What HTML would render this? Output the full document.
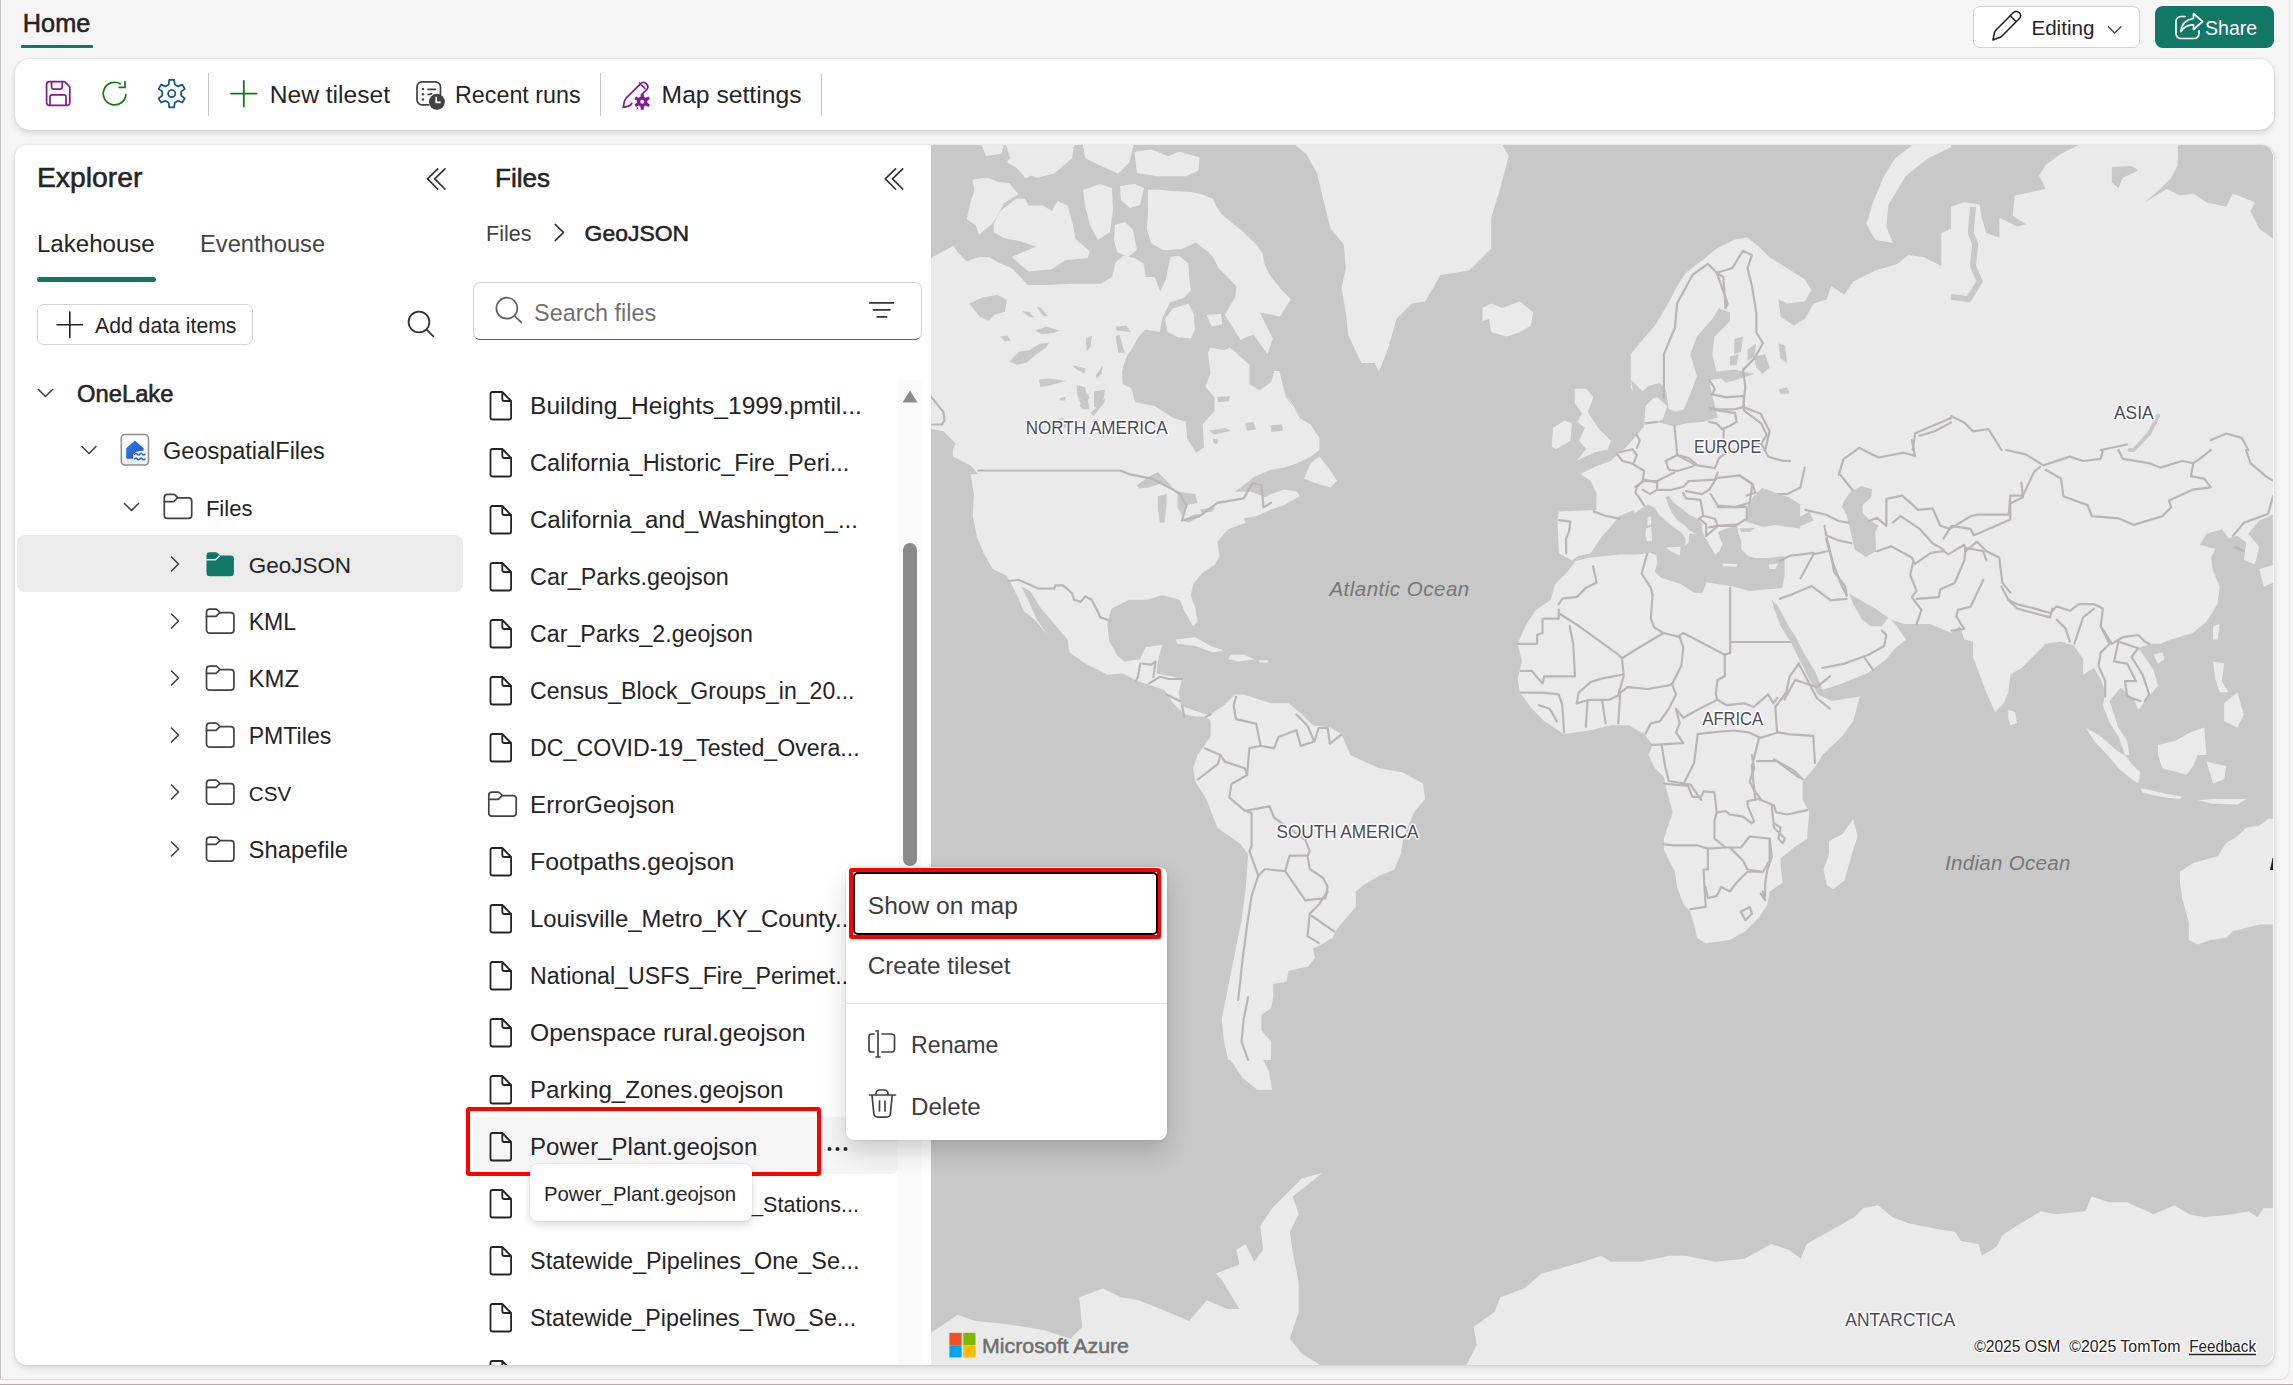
<!DOCTYPE html>
<html><head><meta charset="utf-8"><style>
html,body{margin:0;padding:0;width:2293px;height:1385px;overflow:hidden;background:#f5f5f5;position:relative;font-family:"Liberation Sans",sans-serif}
.t{position:absolute;white-space:nowrap;line-height:1}
</style></head><body>
<div style="position:absolute;left:0px;top:0px;width:1px;height:1380px;background:#c6c6c6"></div>
<div style="position:absolute;left:1px;top:0px;width:1px;height:1380px;background:#f9f9f9"></div>
<div style="position:absolute;left:-20px;top:-20px;width:2310px;height:1400px;border-right:1px solid #e2e2e2;border-bottom:1px solid #dcdcdc;border-bottom-right-radius:10px;box-sizing:border-box"></div>
<div style="position:absolute;left:0px;top:1380px;width:2293px;height:4px;background:#f7f7f7"></div>
<div style="position:absolute;left:0px;top:1384px;width:2293px;height:1px;background:#b9aaa0"></div>
<div class="t" style="left:22.8px;top:10.6px;font-size:25.30px;font-weight:normal;color:#242424;-webkit-text-stroke:0.55px #242424;">Home</div>
<div style="position:absolute;left:21px;top:45px;width:72px;height:3px;background:#117865;border-radius:1px"></div>
<div style="position:absolute;left:1973px;top:6px;width:167px;height:42px;background:#fff;border:1px solid #d1d1d1;border-radius:7px;box-sizing:border-box"></div>
<div class="t" style="left:2031.4px;top:18.1px;font-size:20.64px;font-weight:normal;color:#242424;">Editing</div>
<div style="position:absolute;left:2155px;top:6px;width:119px;height:42px;background:#117865;border-radius:8px"></div>
<div class="t" style="left:2205.1px;top:19.1px;font-size:19.49px;font-weight:normal;color:#ffffff;">Share</div>
<div style="position:absolute;left:15px;top:59px;width:2259px;height:71px;background:#fff;border-radius:15px;box-shadow:0 3px 6px rgba(0,0,0,0.13),0 0 3px rgba(0,0,0,0.10)"></div>
<div class="t" style="left:269.7px;top:83.1px;font-size:24.60px;font-weight:normal;color:#242424;">New tileset</div>
<div class="t" style="left:455.0px;top:84.2px;font-size:23.30px;font-weight:normal;color:#242424;">Recent runs</div>
<div class="t" style="left:661.6px;top:83.0px;font-size:24.68px;font-weight:normal;color:#242424;">Map settings</div>
<div style="position:absolute;left:207.5px;top:73px;width:1.5px;height:43px;background:#c8c8c8"></div>
<div style="position:absolute;left:599.5px;top:73px;width:1.5px;height:43px;background:#c8c8c8"></div>
<div style="position:absolute;left:820.5px;top:73px;width:1.5px;height:43px;background:#c8c8c8"></div>
<div style="position:absolute;left:15px;top:145px;width:2259px;height:1220px;background:#fff;border-radius:12px;box-shadow:0 3px 6px rgba(0,0,0,0.13),0 0 3px rgba(0,0,0,0.10);overflow:hidden"></div>
<div class="t" style="left:36.9px;top:162.8px;font-size:28.33px;font-weight:normal;color:#242424;-webkit-text-stroke:0.55px #242424;">Explorer</div>
<div class="t" style="left:37.0px;top:232.4px;font-size:24.05px;font-weight:normal;color:#242424;">Lakehouse</div>
<div class="t" style="left:200.1px;top:232.8px;font-size:23.67px;font-weight:normal;color:#424242;">Eventhouse</div>
<div style="position:absolute;left:37px;top:277px;width:119px;height:5px;background:#117865;border-radius:3px"></div>
<div style="position:absolute;left:37px;top:304px;width:216px;height:41px;background:#fff;border:1px solid #d1d1d1;border-radius:7px;box-sizing:border-box"></div>
<div class="t" style="left:95.0px;top:315.0px;font-size:21.21px;font-weight:normal;color:#242424;">Add data items</div>
<div style="position:absolute;left:17px;top:535px;width:446px;height:57px;background:#ebebeb;border-radius:8px"></div>
<div class="t" style="left:77.0px;top:382.4px;font-size:23.78px;font-weight:normal;color:#242424;-webkit-text-stroke:0.55px #242424;">OneLake</div>
<div class="t" style="left:163.1px;top:439.6px;font-size:23.48px;font-weight:normal;color:#242424;">GeospatialFiles</div>
<div class="t" style="left:205.9px;top:497.8px;font-size:22.07px;font-weight:normal;color:#242424;">Files</div>
<div class="t" style="left:248.7px;top:554.5px;font-size:22.47px;font-weight:normal;color:#242424;">GeoJSON</div>
<div class="t" style="left:248.7px;top:610.9px;font-size:23.10px;font-weight:normal;color:#242424;">KML</div>
<div class="t" style="left:248.6px;top:667.2px;font-size:23.92px;font-weight:normal;color:#242424;">KMZ</div>
<div class="t" style="left:248.7px;top:724.9px;font-size:23.12px;font-weight:normal;color:#242424;">PMTiles</div>
<div class="t" style="left:248.8px;top:784.0px;font-size:20.67px;font-weight:normal;color:#242424;">CSV</div>
<div class="t" style="left:248.6px;top:838.3px;font-size:23.86px;font-weight:normal;color:#242424;">Shapefile</div>
<div class="t" style="left:495.0px;top:165.0px;font-size:26.14px;font-weight:normal;color:#242424;-webkit-text-stroke:0.55px #242424;">Files</div>
<div class="t" style="left:486.0px;top:223.5px;font-size:21.50px;font-weight:normal;color:#424242;">Files</div>
<div class="t" style="left:584.6px;top:222.3px;font-size:22.93px;font-weight:normal;color:#242424;-webkit-text-stroke:0.55px #242424;">GeoJSON</div>
<div style="position:absolute;left:473px;top:282px;width:449px;height:58px;background:#fff;border:1px solid #d1d1d1;border-bottom:1.5px solid #616161;border-radius:7px;box-sizing:border-box"></div>
<div class="t" style="left:534.1px;top:302.2px;font-size:23.35px;font-weight:normal;color:#707070;">Search files</div>
<div style="position:absolute;left:898px;top:380px;width:24px;height:985px;background:#fafafa"></div>
<div style="position:absolute;left:903px;top:543px;width:14px;height:323px;background:#8a8a8a;border-radius:7px"></div>
<div style="position:absolute;left:473px;top:1117px;width:425px;height:56.5px;background:#f5f5f5;border-radius:6px"></div>
<div style="position:absolute;left:0;top:0;width:2293px;height:1385px;clip-path:inset(380px 0 20px 0)">
<div class="t" style="left:530.0px;top:393.7px;font-size:24.57px;font-weight:normal;color:#242424;">Building_Heights_1999.pmtil...</div>
<div class="t" style="left:530.1px;top:451.6px;font-size:23.55px;font-weight:normal;color:#242424;">California_Historic_Fire_Peri...</div>
<div class="t" style="left:530.0px;top:508.1px;font-size:24.06px;font-weight:normal;color:#242424;">California_and_Washington_...</div>
<div class="t" style="left:530.1px;top:565.7px;font-size:23.36px;font-weight:normal;color:#242424;">Car_Parks.geojson</div>
<div class="t" style="left:530.1px;top:622.9px;font-size:23.16px;font-weight:normal;color:#242424;">Car_Parks_2.geojson</div>
<div class="t" style="left:530.1px;top:680.0px;font-size:23.07px;font-weight:normal;color:#242424;">Census_Block_Groups_in_20...</div>
<div class="t" style="left:530.1px;top:736.9px;font-size:23.17px;font-weight:normal;color:#242424;">DC_COVID-19_Tested_Overa...</div>
<div class="t" style="left:530.0px;top:792.9px;font-size:24.32px;font-weight:normal;color:#242424;">ErrorGeojson</div>
<div class="t" style="left:530.0px;top:849.5px;font-size:24.83px;font-weight:normal;color:#242424;">Footpaths.geojson</div>
<div class="t" style="left:530.0px;top:907.3px;font-size:23.90px;font-weight:normal;color:#242424;">Louisville_Metro_KY_County..</div>
<div class="t" style="left:530.1px;top:964.9px;font-size:23.18px;font-weight:normal;color:#242424;">National_USFS_Fire_Perimet..</div>
<div class="t" style="left:530.0px;top:1020.6px;font-size:24.65px;font-weight:normal;color:#242424;">Openspace rural.geojson</div>
<div class="t" style="left:530.0px;top:1078.1px;font-size:24.13px;font-weight:normal;color:#242424;">Parking_Zones.geojson</div>
<div class="t" style="left:530.0px;top:1135.1px;font-size:24.05px;font-weight:normal;color:#242424;">Power_Plant.geojson</div>
<div class="t" style="left:751.1px;top:1194.2px;font-size:21.59px;font-weight:normal;color:#242424;">_Stations...</div>
<div class="t" style="left:530.1px;top:1249.7px;font-size:23.43px;font-weight:normal;color:#242424;">Statewide_Pipelines_One_Se...</div>
<div class="t" style="left:530.1px;top:1306.8px;font-size:23.29px;font-weight:normal;color:#242424;">Statewide_Pipelines_Two_Se...</div>
<div class="t" style="left:530.1px;top:1363.5px;font-size:23.60px;font-weight:normal;color:#242424;">Street_Lights_Inventory.geojson</div>
<svg width="2293" height="1385" style="position:absolute;left:0;top:0" fill="none" stroke-linecap="round" stroke-linejoin="round"><path d="M492.5,392 h9.8 l8.8,9 v16.5 a2,2 0 0 1 -2,2 h-16.6 a2,2 0 0 1 -2,-2 v-23.5 a2,2 0 0 1 2,-2 z M502.3,392 v7 a2,2 0 0 0 2,2 h6.8" stroke="#242424" stroke-width="1.8"/><path d="M492.5,449 h9.8 l8.8,9 v16.5 a2,2 0 0 1 -2,2 h-16.6 a2,2 0 0 1 -2,-2 v-23.5 a2,2 0 0 1 2,-2 z M502.3,449 v7 a2,2 0 0 0 2,2 h6.8" stroke="#242424" stroke-width="1.8"/><path d="M492.5,506 h9.8 l8.8,9 v16.5 a2,2 0 0 1 -2,2 h-16.6 a2,2 0 0 1 -2,-2 v-23.5 a2,2 0 0 1 2,-2 z M502.3,506 v7 a2,2 0 0 0 2,2 h6.8" stroke="#242424" stroke-width="1.8"/><path d="M492.5,563 h9.8 l8.8,9 v16.5 a2,2 0 0 1 -2,2 h-16.6 a2,2 0 0 1 -2,-2 v-23.5 a2,2 0 0 1 2,-2 z M502.3,563 v7 a2,2 0 0 0 2,2 h6.8" stroke="#242424" stroke-width="1.8"/><path d="M492.5,620 h9.8 l8.8,9 v16.5 a2,2 0 0 1 -2,2 h-16.6 a2,2 0 0 1 -2,-2 v-23.5 a2,2 0 0 1 2,-2 z M502.3,620 v7 a2,2 0 0 0 2,2 h6.8" stroke="#242424" stroke-width="1.8"/><path d="M492.5,677 h9.8 l8.8,9 v16.5 a2,2 0 0 1 -2,2 h-16.6 a2,2 0 0 1 -2,-2 v-23.5 a2,2 0 0 1 2,-2 z M502.3,677 v7 a2,2 0 0 0 2,2 h6.8" stroke="#242424" stroke-width="1.8"/><path d="M492.5,734 h9.8 l8.8,9 v16.5 a2,2 0 0 1 -2,2 h-16.6 a2,2 0 0 1 -2,-2 v-23.5 a2,2 0 0 1 2,-2 z M502.3,734 v7 a2,2 0 0 0 2,2 h6.8" stroke="#242424" stroke-width="1.8"/><path d="M488.8,795.4 a3.2,3.2 0 0 1 3.2,-3.2 h6 q1,0 1.8,0.8 l2.6,2.6 h10.6 a3.2,3.2 0 0 1 3.2,3.2 v14.2 a3.2,3.2 0 0 1 -3.2,3.2 h-21 a3.2,3.2 0 0 1 -3.2,-3.2 z" stroke="#424242" stroke-width="1.7"/><path d="M488.8,799.4 h9.5 l3.6,-3.6" stroke="#424242" stroke-width="1.7"/><path d="M492.5,848 h9.8 l8.8,9 v16.5 a2,2 0 0 1 -2,2 h-16.6 a2,2 0 0 1 -2,-2 v-23.5 a2,2 0 0 1 2,-2 z M502.3,848 v7 a2,2 0 0 0 2,2 h6.8" stroke="#242424" stroke-width="1.8"/><path d="M492.5,905 h9.8 l8.8,9 v16.5 a2,2 0 0 1 -2,2 h-16.6 a2,2 0 0 1 -2,-2 v-23.5 a2,2 0 0 1 2,-2 z M502.3,905 v7 a2,2 0 0 0 2,2 h6.8" stroke="#242424" stroke-width="1.8"/><path d="M492.5,962 h9.8 l8.8,9 v16.5 a2,2 0 0 1 -2,2 h-16.6 a2,2 0 0 1 -2,-2 v-23.5 a2,2 0 0 1 2,-2 z M502.3,962 v7 a2,2 0 0 0 2,2 h6.8" stroke="#242424" stroke-width="1.8"/><path d="M492.5,1019 h9.8 l8.8,9 v16.5 a2,2 0 0 1 -2,2 h-16.6 a2,2 0 0 1 -2,-2 v-23.5 a2,2 0 0 1 2,-2 z M502.3,1019 v7 a2,2 0 0 0 2,2 h6.8" stroke="#242424" stroke-width="1.8"/><path d="M492.5,1076 h9.8 l8.8,9 v16.5 a2,2 0 0 1 -2,2 h-16.6 a2,2 0 0 1 -2,-2 v-23.5 a2,2 0 0 1 2,-2 z M502.3,1076 v7 a2,2 0 0 0 2,2 h6.8" stroke="#242424" stroke-width="1.8"/><path d="M492.5,1133 h9.8 l8.8,9 v16.5 a2,2 0 0 1 -2,2 h-16.6 a2,2 0 0 1 -2,-2 v-23.5 a2,2 0 0 1 2,-2 z M502.3,1133 v7 a2,2 0 0 0 2,2 h6.8" stroke="#242424" stroke-width="1.8"/><path d="M492.5,1190 h9.8 l8.8,9 v16.5 a2,2 0 0 1 -2,2 h-16.6 a2,2 0 0 1 -2,-2 v-23.5 a2,2 0 0 1 2,-2 z M502.3,1190 v7 a2,2 0 0 0 2,2 h6.8" stroke="#242424" stroke-width="1.8"/><path d="M492.5,1247 h9.8 l8.8,9 v16.5 a2,2 0 0 1 -2,2 h-16.6 a2,2 0 0 1 -2,-2 v-23.5 a2,2 0 0 1 2,-2 z M502.3,1247 v7 a2,2 0 0 0 2,2 h6.8" stroke="#242424" stroke-width="1.8"/><path d="M492.5,1304 h9.8 l8.8,9 v16.5 a2,2 0 0 1 -2,2 h-16.6 a2,2 0 0 1 -2,-2 v-23.5 a2,2 0 0 1 2,-2 z M502.3,1304 v7 a2,2 0 0 0 2,2 h6.8" stroke="#242424" stroke-width="1.8"/><path d="M492.5,1361 h9.8 l8.8,9 v16.5 a2,2 0 0 1 -2,2 h-16.6 a2,2 0 0 1 -2,-2 v-23.5 a2,2 0 0 1 2,-2 z M502.3,1361 v7 a2,2 0 0 0 2,2 h6.8" stroke="#242424" stroke-width="1.8"/></svg></div>
<div style="position:absolute;left:931px;top:145px;width:1343px;height:1220px;background:#c8c8c8;border-radius:0 12px 12px 0;overflow:hidden"><svg width="1343" height="1220" viewBox="931 145 1343 1220" style="position:absolute;left:0;top:0;display:block">
<rect x="931" y="145" width="1343" height="1220" fill="#c8c8c8"/>
<g fill="#eaeaea"><path d="M931.0,258.0 L953.4,245.7 L957.9,252.4 L966.8,261.4 L979.1,256.9 L989.2,256.9 L998.2,262.5 L1011.6,268.1 L1020.5,277.1 L1027.3,284.9 L1048.5,284.9 L1070.9,283.8 L1101.0,283.8 L1112.2,277.1 L1115.5,262.5 L1123.4,255.8 L1134.6,258.0 L1143.5,263.6 L1145.8,277.1 L1154.7,277.1 L1160.3,291.6 L1165.9,279.3 L1170.4,256.9 L1179.3,255.8 L1188.3,263.6 L1189.4,279.3 L1191.0,290.4 L1183.2,298.2 L1170.2,302.1 L1162.4,317.7 L1159.8,332.0 L1145.5,329.4 L1139.0,335.9 L1132.5,347.6 L1126.0,358.0 L1122.1,371.0 L1122.7,384.0 L1131.2,387.9 L1135.1,402.2 L1154.6,406.1 L1172.8,417.8 L1185.8,421.7 L1187.1,438.5 L1196.2,452.8 L1204.0,447.6 L1202.7,424.2 L1214.4,411.3 L1214.4,397.0 L1205.3,386.6 L1210.5,373.6 L1207.9,352.8 L1210.5,347.6 L1224.8,350.2 L1230.0,347.6 L1241.7,358.0 L1249.4,364.5 L1249.4,384.0 L1259.8,390.5 L1271.5,381.4 L1274.1,371.0 L1279.3,371.0 L1285.8,397.0 L1300.0,416.5 L1282.0,387.2 L1290.8,402.7 L1299.6,418.1 L1310.6,424.7 L1319.4,437.9 L1319.4,450.0 L1310.6,456.6 L1297.4,463.2 L1284.2,467.6 L1271.0,469.8 L1254.7,476.4 L1234.9,491.8 L1250.3,491.8 L1265.7,497.3 L1271.0,494.0 L1284.2,489.6 L1297.4,491.8 L1299.6,496.2 L1284.2,505.1 L1271.0,509.5 L1256.9,516.1 L1243.7,518.3 L1245.9,522.7 L1228.3,529.3 L1223.9,533.7 L1217.3,542.5 L1219.5,555.7 L1215.1,564.5 L1201.9,573.3 L1193.1,584.3 L1190.9,595.3 L1195.3,608.6 L1197.5,621.8 L1193.1,626.2 L1184.2,610.8 L1179.8,599.7 L1162.2,595.3 L1146.8,599.7 L1129.2,599.7 L1111.6,608.6 L1107.2,624.0 L1109.4,641.6 L1118.2,657.0 L1124.8,661.4 L1140.2,659.2 L1145.7,647.1 L1162.2,644.9 L1157.8,661.4 L1156.7,673.5 L1173.2,676.8 L1182.0,679.0 L1178.7,692.2 L1180.9,705.5 L1195.3,711.0 L1206.3,714.3 L1210.7,714.3 L1223.9,705.5 L1234.9,694.4 L1243.7,694.4 L1256.9,698.8 L1271.0,703.2 L1288.6,703.2 L1301.8,714.3 L1312.8,725.3 L1330.5,727.5 L1341.5,734.1 L1350.3,755.0 L1378.9,768.2 L1403.1,772.6 L1422.9,783.6 L1425.2,799.0 L1414.1,812.3 L1403.1,838.7 L1400.9,854.1 L1394.3,869.5 L1378.9,876.1 L1363.5,884.9 L1355.8,891.5 L1355.8,906.9 L1348.1,915.8 L1337.1,929.0 L1332.7,937.8 L1321.6,944.4 L1312.8,948.8 L1315.0,957.6 L1308.4,966.4 L1288.6,970.8 L1286.4,981.8 L1273.2,984.0 L1273.2,997.2 L1271.0,1008.2 L1261.3,1014.9 L1261.3,1030.3 L1271.0,1041.3 L1271.0,1060.0 L1269.1,1060.0 L1230.5,1060.0 L1228.3,1060.0 L1223.9,1041.3 L1221.7,1019.3 L1226.1,997.2 L1230.5,975.2 L1234.9,953.2 L1241.5,920.2 L1245.9,887.1 L1248.1,854.1 L1239.3,843.1 L1217.3,827.7 L1206.3,799.0 L1195.3,781.4 L1193.1,768.2 L1197.5,755.0 L1210.7,736.3 L1210.7,720.9 L1206.3,716.5 L1195.3,716.5 L1184.2,714.3 L1173.2,703.2 L1164.4,690.0 L1151.2,685.6 L1138.0,681.2 L1122.6,673.5 L1107.2,674.6 L1085.2,663.6 L1069.7,652.6 L1067.5,639.4 L1054.3,624.0 L1041.1,608.6 L1030.1,590.9 L1021.3,586.5 L1027.9,599.7 L1036.7,619.6 L1047.7,635.0 L1034.5,619.6 L1023.5,610.8 L1019.1,599.7 L1010.3,582.1 L1005.9,575.5 L992.7,568.9 L983.9,553.5 L977.2,538.1 L972.8,516.1 L973.9,494.0 L970.6,474.2 L978.3,474.2 L970.6,465.4 L953.0,456.6 L953.0,450.0 L955.6,443.5 L943.3,431.2 L931.0,428.8 Z"/><path d="M972.4,179.7 L987.0,177.5 L998.2,181.9 L1009.3,183.1 L1018.3,194.2 L1003.7,203.2 L998.2,214.4 L992.6,223.3 L984.7,230.1 L979.1,234.5 L975.8,225.6 L966.8,218.9 L970.2,203.2 L974.6,189.8 Z"/><path d="M993.7,223.3 L1000.4,211.0 L1016.1,198.7 L1025.0,198.7 L1028.4,205.4 L1042.9,205.4 L1051.9,211.0 L1057.5,201.0 L1067.5,205.4 L1073.1,225.6 L1075.4,239.0 L1089.9,251.3 L1087.7,258.0 L1065.3,260.3 L1051.9,269.2 L1028.4,271.5 L1011.6,256.9 L1036.2,246.8 L1020.5,241.3 L1003.7,237.9 L993.7,232.3 Z"/><path d="M1007.1,161.8 L1016.1,151.7 L1031.7,156.2 L1040.7,162.9 L1031.7,175.2 L1026.1,178.6 L1016.1,167.4 L1008.2,162.9 Z"/><path d="M1037.3,145.0 L1068.7,145.0 L1067.5,156.2 L1059.7,167.4 L1051.9,165.1 L1038.4,155.1 Z"/><path d="M981.6,145.0 L1003.7,145.0 L1001.5,153.8 L986.1,156.0 Z"/><path d="M1005.9,145.0 L1074.1,145.0 L1071.9,158.2 L1054.3,173.6 L1036.7,178.0 L1023.5,171.4 L1010.3,158.2 Z"/><path d="M1082.9,145.0 L1133.6,145.0 L1129.2,162.6 L1118.2,173.6 L1098.4,164.8 L1085.2,158.2 Z"/><path d="M1134.6,151.7 L1151.4,149.5 L1168.2,156.2 L1179.3,151.7 L1199.5,157.3 L1198.4,170.7 L1186.1,176.3 L1157.0,176.3 L1136.8,173.0 Z"/><path d="M1083.0,190.0 L1100.0,184.0 L1112.0,188.0 L1113.0,210.0 L1110.0,232.0 L1098.0,240.0 L1090.0,225.0 L1085.0,205.0 Z"/><path d="M1115.0,225.0 L1125.0,222.0 L1133.0,230.0 L1137.0,250.0 L1128.0,257.0 L1117.0,252.0 L1114.0,240.0 Z"/><path d="M1120.0,186.0 L1135.0,184.0 L1144.0,188.0 L1140.0,205.0 L1130.0,208.0 L1121.0,200.0 Z"/><path d="M1148.0,189.8 L1159.2,189.8 L1172.6,190.9 L1190.5,192.0 L1201.7,194.2 L1212.9,198.7 L1216.3,206.6 L1221.9,214.4 L1229.7,221.1 L1240.9,230.1 L1255.4,243.5 L1262.2,252.4 L1264.4,263.6 L1268.9,273.7 L1280.1,288.3 L1290.8,299.2 L1279.8,316.8 L1271.0,314.6 L1259.8,312.5 L1272.8,338.5 L1267.6,354.1 L1253.3,334.6 L1240.4,339.8 L1230.0,322.9 L1224.8,315.1 L1235.2,296.9 L1236.5,286.5 L1229.7,279.3 L1218.5,268.1 L1212.9,256.9 L1207.3,251.3 L1196.1,242.4 L1181.6,249.1 L1163.7,250.2 L1151.4,243.5 L1146.9,228.9 L1148.0,212.2 Z"/><path d="M1172.8,308.6 L1188.4,303.4 L1193.6,313.8 L1194.9,329.4 L1191.0,338.5 L1178.0,337.2 L1167.6,332.0 L1165.0,319.0 Z"/><path d="M1206.6,315.1 L1220.9,313.8 L1222.2,324.2 L1211.8,326.8 Z"/><path d="M1295.2,145.0 L1306.2,153.8 L1317.2,173.6 L1323.9,202.3 L1330.5,228.7 L1343.7,244.1 L1345.9,268.3 L1341.5,288.1 L1345.9,312.4 L1348.1,334.4 L1361.3,363.0 L1374.5,363.0 L1378.9,371.8 L1387.7,349.8 L1396.5,319.0 L1411.9,303.6 L1425.2,301.4 L1440.6,274.9 L1469.2,270.5 L1491.2,248.5 L1491.2,217.7 L1500.0,189.0 L1508.8,156.0 L1502.2,145.0 Z"/><path d="M1482.4,308.0 L1491.2,303.6 L1502.2,308.0 L1519.8,301.4 L1533.1,312.4 L1530.9,325.6 L1519.8,332.2 L1506.6,336.6 L1491.2,332.2 L1489.0,319.0 L1482.4,321.2 Z"/><path d="M1304.0,478.6 L1310.6,463.2 L1319.4,456.6 L1328.3,467.6 L1337.1,480.8 L1330.5,487.4 L1315.0,483.0 Z"/><path d="M1175.4,639.4 L1195.3,637.2 L1210.7,646.0 L1223.9,650.4 L1212.9,652.6 L1195.3,646.0 L1177.6,643.8 Z"/><path d="M1230.5,654.8 L1243.7,654.8 L1254.7,659.2 L1239.3,661.4 L1228.3,659.2 Z"/><path d="M1230.5,1060.0 L1242.4,1077.8 L1257.2,1089.7 L1272.0,1089.7 L1269.1,1071.9 L1263.1,1060.0 Z"/><path d="M1580.6,473.9 L1595.0,466.7 L1610.9,460.9 L1616.7,455.1 L1625.3,447.9 L1636.9,434.9 L1644.1,426.2 L1645.6,406.0 L1652.8,398.8 L1657.1,397.3 L1667.2,406.0 L1662.9,419.0 L1657.1,421.9 L1674.4,426.2 L1686.0,423.3 L1703.3,421.9 L1717.8,417.6 L1714.9,406.0 L1712.0,394.4 L1709.1,380.0 L1721.1,378.4 L1725.5,382.8 L1734.3,380.6 L1754.1,374.0 L1734.3,369.6 L1716.7,371.8 L1712.3,354.2 L1714.5,336.6 L1729.9,321.2 L1729.9,312.4 L1718.9,308.0 L1712.3,319.0 L1696.9,336.6 L1690.3,354.2 L1696.9,376.2 L1690.3,393.8 L1683.7,409.3 L1675.9,411.8 L1668.7,408.9 L1665.8,390.1 L1660.0,382.9 L1648.4,385.8 L1642.7,391.6 L1631.1,380.0 L1633.0,391.6 L1630.8,387.2 L1630.8,354.2 L1639.6,343.2 L1655.0,325.6 L1668.3,303.6 L1677.1,285.9 L1685.9,272.7 L1703.5,259.5 L1716.7,248.5 L1734.3,239.7 L1747.5,237.5 L1758.5,246.3 L1769.6,257.3 L1787.2,268.3 L1804.8,279.3 L1811.4,290.3 L1804.8,301.4 L1787.2,303.6 L1778.4,299.2 L1780.6,316.8 L1793.8,325.6 L1804.8,319.0 L1813.6,303.6 L1826.8,299.2 L1831.2,285.9 L1844.4,294.7 L1853.2,281.5 L1875.3,270.5 L1897.3,263.9 L1908.3,255.1 L1923.7,257.3 L1941.3,266.1 L1941.3,233.1 L1951.0,228.7 L1951.0,206.7 L1964.2,202.3 L1979.6,204.5 L1981.8,217.7 L1986.2,233.1 L1999.4,237.5 L1999.4,217.7 L2017.1,226.5 L2025.9,224.3 L2012.7,215.5 L2014.9,195.6 L2045.7,189.0 L2039.1,175.8 L2045.7,164.8 L2061.1,153.8 L2078.7,145.0 L2177.8,145.0 L2177.8,164.8 L2171.2,178.0 L2160.2,189.0 L2144.8,202.3 L2166.8,189.0 L2180.0,195.6 L2193.2,193.4 L2206.5,202.3 L2226.3,206.7 L2232.9,193.4 L2254.9,202.3 L2250.5,211.1 L2259.3,228.7 L2274.7,239.7 L2274.7,513.9 L2259.3,520.5 L2248.3,533.7 L2259.3,546.9 L2254.9,564.5 L2243.9,560.1 L2246.1,542.5 L2237.3,535.9 L2228.5,538.1 L2221.9,529.3 L2206.5,533.7 L2199.8,544.7 L2215.3,549.1 L2210.9,557.9 L2213.1,571.1 L2219.7,586.5 L2217.5,604.2 L2206.5,621.8 L2193.2,632.8 L2171.2,639.4 L2160.2,643.8 L2149.2,643.8 L2138.2,648.2 L2144.8,657.0 L2153.6,670.2 L2158.0,685.6 L2149.2,696.6 L2138.2,709.9 L2133.8,698.8 L2120.6,687.8 L2109.6,701.0 L2114.0,714.3 L2118.4,727.5 L2127.2,740.7 L2129.4,755.0 L2125.0,755.0 L2118.4,736.3 L2109.6,723.1 L2102.9,705.5 L2105.2,692.2 L2100.7,679.0 L2094.1,668.0 L2083.1,674.6 L2083.1,659.2 L2074.3,646.0 L2061.1,641.6 L2045.7,643.8 L2034.7,654.8 L2021.5,668.0 L2010.5,674.6 L2008.3,692.2 L2003.9,703.2 L1995.0,712.1 L1986.2,692.2 L1979.6,674.6 L1973.0,657.0 L1973.0,641.6 L1964.2,639.4 L1959.8,626.2 L1951.0,632.8 L1930.3,624.0 L1903.9,624.0 L1890.7,619.6 L1875.3,608.6 L1859.8,599.7 L1848.8,593.1 L1853.2,604.2 L1862.0,619.6 L1870.9,626.2 L1881.9,626.2 L1888.5,617.4 L1895.1,624.0 L1906.1,639.4 L1895.1,648.2 L1886.3,659.2 L1868.7,672.4 L1842.2,683.4 L1822.4,690.0 L1815.8,672.4 L1804.8,654.8 L1796.0,637.2 L1787.2,624.0 L1778.4,606.4 L1771.8,599.7 L1774.0,608.6 L1780.6,626.2 L1791.6,643.8 L1800.4,661.4 L1809.2,679.0 L1818.0,694.4 L1831.2,701.0 L1859.8,696.6 L1853.2,720.9 L1842.2,736.3 L1822.4,755.0 L1815.8,766.0 L1802.6,781.4 L1802.6,799.0 L1809.2,812.3 L1807.0,838.7 L1793.8,847.5 L1780.6,858.5 L1780.6,865.1 L1782.8,882.7 L1769.6,891.5 L1767.4,904.7 L1758.5,918.0 L1745.3,931.2 L1729.9,940.0 L1705.7,943.3 L1696.9,937.8 L1694.7,926.8 L1690.3,911.4 L1683.7,904.7 L1677.1,887.1 L1674.9,871.7 L1663.9,849.7 L1663.9,838.7 L1668.3,825.5 L1672.7,812.3 L1666.1,788.0 L1663.9,777.0 L1655.0,768.2 L1648.4,755.0 L1652.8,745.1 L1644.0,734.1 L1628.6,725.3 L1611.0,725.3 L1588.1,730.8 L1563.9,734.1 L1544.1,720.9 L1530.9,707.7 L1519.8,692.2 L1517.6,679.0 L1522.0,661.4 L1517.6,643.8 L1526.5,624.0 L1535.3,610.8 L1550.7,599.7 L1555.1,584.3 L1566.1,573.3 L1574.9,562.3 L1571.9,560.6 L1558.9,553.3 L1557.4,518.7 L1558.9,511.4 L1596.4,510.0 L1596.4,492.7 L1590.7,481.1 Z"/><path d="M1574.8,388.7 L1586.3,388.7 L1593.6,397.3 L1587.8,411.8 L1597.9,427.7 L1610.9,440.7 L1608.0,449.3 L1595.0,452.2 L1582.0,458.0 L1576.2,460.9 L1586.3,449.3 L1579.1,440.7 L1584.9,427.7 L1577.7,421.9 L1582.0,413.2 L1574.8,403.1 Z"/><path d="M1553.1,427.7 L1564.7,420.4 L1571.9,423.3 L1570.4,440.7 L1556.0,449.3 L1551.7,446.4 Z"/><path d="M1912.7,145.0 L1895.1,158.2 L1884.1,175.8 L1873.1,202.3 L1866.5,224.3 L1875.3,239.7 L1892.9,243.0 L1886.3,226.5 L1888.5,204.5 L1906.1,175.8 L1928.1,158.2 L1951.0,147.2 L1951.0,145.0 Z"/><path d="M1853.2,818.9 L1857.6,836.5 L1853.2,849.7 L1844.4,880.5 L1833.4,889.3 L1826.8,884.9 L1823.5,869.5 L1829.0,854.1 L1829.0,840.9 L1842.2,834.3 Z"/><path d="M2008.3,709.9 L2014.9,712.1 L2017.1,723.1 L2010.5,725.3 L2008.3,718.7 Z"/><path d="M2213.1,626.2 L2219.7,624.0 L2217.5,639.4 L2213.1,639.4 Z"/><path d="M2153.6,654.8 L2162.4,652.6 L2164.6,659.2 L2158.0,663.6 Z"/><path d="M2213.1,661.4 L2224.1,663.6 L2221.9,681.2 L2228.5,692.2 L2219.7,692.2 L2215.3,679.0 Z"/><path d="M2224.1,703.2 L2237.3,692.2 L2243.9,714.3 L2237.3,727.5 L2224.1,720.9 Z"/><path d="M2158.0,745.1 L2175.6,740.7 L2191.0,731.9 L2204.2,727.5 L2206.5,755.0 L2197.6,755.0 L2193.2,766.0 L2186.6,774.8 L2162.4,768.2 L2158.0,755.0 Z"/><path d="M2085.3,727.5 L2100.7,736.3 L2118.4,751.7 L2125.0,755.0 L2131.6,763.8 L2140.4,772.6 L2138.2,783.6 L2131.6,779.2 L2118.4,768.2 L2107.4,755.0 L2095.0,742.0 Z"/><path d="M2140.4,788.0 L2160.2,792.4 L2182.2,796.8 L2180.0,799.0 L2160.2,796.8 L2142.6,792.4 Z"/><path d="M2206.5,761.6 L2213.1,783.6 L2224.1,779.2 L2226.3,766.0 L2215.3,763.8 Z"/><path d="M2197.6,800.1 L2215.3,799.0 L2246.1,799.0 L2237.3,804.5 L2210.9,803.4 Z"/><path d="M2259.3,568.9 L2274.7,564.5 L2274.7,582.1 L2263.7,586.5 Z"/><path d="M2180.0,871.7 L2193.2,862.9 L2217.5,856.3 L2226.3,843.1 L2237.3,836.5 L2246.1,827.7 L2259.3,825.5 L2268.1,818.9 L2274.7,818.9 L2274.7,924.6 L2259.3,924.6 L2232.9,931.2 L2226.3,937.8 L2210.9,940.0 L2197.6,944.4 L2188.8,940.0 L2188.8,922.4 L2182.2,898.1 L2180.0,882.7 Z"/><path d="M931.0,1368.4 L931.0,1332.8 L957.7,1315.0 L975.5,1321.0 L1005.1,1323.9 L1043.7,1329.9 L1070.4,1338.8 L1082.2,1326.9 L1079.3,1297.2 L1103.0,1288.4 L1120.8,1297.2 L1138.6,1300.2 L1168.2,1312.1 L1189.0,1321.0 L1206.8,1300.2 L1227.6,1309.1 L1239.4,1309.1 L1221.6,1279.5 L1215.7,1273.5 L1239.4,1264.6 L1236.5,1249.8 L1245.4,1243.9 L1254.3,1261.7 L1263.1,1249.8 L1260.2,1226.1 L1272.0,1208.3 L1286.9,1193.5 L1301.7,1178.6 L1322.5,1172.7 L1292.8,1196.4 L1298.7,1214.2 L1289.8,1232.0 L1292.8,1252.8 L1298.7,1282.4 L1298.7,1312.1 L1289.8,1338.8 L1301.7,1353.6 L1325.4,1368.4 Z"/><path d="M1464.8,1368.4 L1476.7,1344.7 L1473.7,1326.9 L1494.5,1312.1 L1500.4,1297.2 L1524.1,1288.4 L1541.9,1273.5 L1583.4,1261.7 L1601.2,1255.7 L1611.0,1261.7 L1640.7,1261.7 L1670.3,1255.7 L1685.1,1255.7 L1714.8,1261.7 L1744.5,1258.7 L1771.1,1243.9 L1788.9,1249.8 L1800.8,1258.7 L1806.7,1243.9 L1833.4,1229.0 L1854.2,1217.2 L1863.1,1208.3 L1877.9,1205.3 L1892.7,1217.2 L1907.6,1223.1 L1937.2,1229.0 L1955.0,1232.0 L1960.9,1240.9 L1978.7,1243.9 L1981.7,1255.7 L1996.5,1246.8 L2002.5,1235.0 L2026.2,1220.1 L2041.0,1211.2 L2055.8,1214.2 L2085.5,1211.2 L2091.4,1196.4 L2109.2,1202.3 L2127.0,1202.3 L2153.7,1214.2 L2174.5,1205.3 L2189.3,1214.2 L2204.1,1217.2 L2233.8,1214.2 L2248.6,1211.2 L2257.5,1217.2 L2263.4,1208.3 L2281.2,1208.3 L2281.2,1368.4 Z"/><path d="M1259.1,660.3 L1267.9,660.3 L1267.9,662.5 L1259.1,662.5 Z"/></g>
<g fill="#c8c8c8"><path d="M1571.9,560.6 L1577.7,556.2 L1590.7,553.3 L1602.2,536.0 L1613.8,523.0 L1619.6,515.8 L1634.0,510.0 L1634.7,512.9 L1641.7,508.6 L1647.7,504.3 L1654.7,507.7 L1659.0,514.7 L1665.9,520.7 L1672.0,525.9 L1680.7,532.0 L1685.0,537.2 L1685.9,542.4 L1683.3,547.6 L1688.5,542.4 L1689.3,533.7 L1696.3,533.7 L1689.3,530.3 L1684.1,525.1 L1677.2,519.9 L1672.0,512.9 L1668.5,506.0 L1665.9,497.3 L1668.5,495.6 L1672.9,501.7 L1680.7,507.7 L1689.3,514.7 L1698.0,519.0 L1702.3,525.1 L1702.3,532.0 L1704.9,537.2 L1708.4,542.4 L1711.0,547.6 L1715.3,554.5 L1719.7,551.1 L1722.3,544.1 L1717.9,532.0 L1724.0,529.4 L1732.7,526.8 L1737.0,525.9 L1737.9,532.0 L1741.3,540.7 L1741.3,549.3 L1748.2,556.3 L1755.2,558.0 L1767.3,558.0 L1782.9,556.3 L1784.6,558.0 L1784.6,575.3 L1782.0,588.3 L1767.3,589.2 L1750.0,590.9 L1732.7,586.6 L1706.7,582.3 L1702.3,592.7 L1693.7,592.7 L1680.7,584.0 L1667.7,579.7 L1661.6,577.9 L1654.7,571.9 L1657.3,562.3 L1656.4,555.4 L1650.3,552.8 L1637.3,554.5 L1620.0,554.5 L1587.8,557.7 L1573.3,562.0 Z"/><path d="M1748.2,504.3 L1754.3,495.6 L1762.1,487.8 L1776.0,493.0 L1789.0,497.3 L1800.1,504.3 L1800.1,528.5 L1776.0,525.1 L1763.0,526.8 L1745.6,521.6 Z"/><path d="M1809.2,511.7 L1813.6,520.5 L1798.2,527.1 L1782.8,526.0 Z"/><path d="M1739.6,528.5 L1755.2,527.7 L1750.0,532.0 L1741.3,532.0 Z"/><path d="M1843.5,501.9 L1849.9,492.4 L1861.0,486.1 L1872.1,489.2 L1871.3,497.2 L1862.6,505.1 L1862.6,513.1 L1868.9,519.4 L1878.5,525.8 L1875.3,532.1 L1876.1,551.2 L1865.8,556.7 L1854.7,549.6 L1851.5,535.3 L1848.3,522.6 L1846.7,514.7 L1841.9,506.7 Z"/><path d="M1136.9,485.2 L1149.0,476.4 L1157.8,472.0 L1173.2,487.4 L1162.2,483.0 L1149.0,487.4 L1139.1,488.5 Z"/><path d="M1157.8,496.2 L1166.6,494.0 L1166.6,505.1 L1164.4,522.7 L1160.0,522.7 L1157.8,509.5 Z"/><path d="M1177.6,491.8 L1195.3,494.0 L1197.5,502.9 L1186.5,505.1 L1182.0,516.1 L1177.6,507.3 Z"/><path d="M1182.0,520.5 L1195.3,513.9 L1204.1,513.9 L1188.7,522.7 Z"/><path d="M1199.7,509.5 L1215.1,507.3 L1212.9,511.7 L1201.9,512.8 Z"/><path d="M969.1,303.5 L982.6,297.4 L997.3,294.9 L1007.1,299.8 L1004.7,312.1 L994.9,314.6 L988.7,320.7 L980.1,317.0 Z"/><path d="M1009.6,361.2 L1019.4,351.4 L1029.2,350.2 L1039.1,344.0 L1048.9,342.8 L1046.4,347.7 L1036.6,353.9 L1026.8,362.4 L1017.0,364.9 Z"/><path d="M1039.1,379.6 L1048.9,378.4 L1066.1,380.9 L1047.7,385.8 L1040.3,387.0 Z"/><path d="M1076.3,385.0 L1085.2,387.2 L1089.6,409.3 L1082.9,409.3 L1078.5,398.2 Z"/><path d="M1754.1,356.4 L1765.2,354.2 L1769.6,367.4 L1762.9,374.0 L1756.3,367.4 Z"/><path d="M1778.4,343.2 L1785.0,345.4 L1787.2,363.0 L1780.6,358.6 Z"/><path d="M2111.8,167.0 L2131.6,165.9 L2138.2,170.3 L2122.8,178.0 L2118.4,187.9 L2111.8,182.4 Z"/><path d="M1021.9,310.9 L1029.2,312.1 L1034.1,317.6 L1028.0,316.4 Z"/><path d="M1036.6,306.0 L1041.5,308.4 L1047.7,315.8 L1044.0,316.4 L1039.1,310.9 Z"/><path d="M1035.4,330.5 L1046.4,326.8 L1059.9,330.5 L1053.8,333.0 L1041.5,334.2 Z"/><path d="M1085.7,339.1 L1091.9,335.4 L1090.6,346.5 L1086.9,351.4 Z"/><path d="M1072.2,364.9 L1085.7,368.6 L1084.5,373.5 L1077.1,369.8 Z"/><path d="M1095.5,376.0 L1102.9,364.9 L1101.7,373.5 L1096.8,378.4 Z"/><path d="M1077.1,388.2 L1082.0,385.8 L1080.8,395.6 L1077.1,395.6 Z"/><path d="M1079.6,405.4 L1088.2,393.1 L1089.4,398.1 L1082.0,409.1 Z"/><path d="M1090.6,412.8 L1105.4,398.1 L1104.1,403.0 L1093.1,416.5 Z"/><path d="M1001.0,336.7 L1007.1,335.4 L1010.8,340.3 L1004.7,341.6 Z"/><path d="M1059.9,398.1 L1066.1,396.8 L1064.8,400.5 L1059.9,400.5 Z"/><path d="M1115.6,326.8 L1126.0,325.5 L1131.2,332.0 L1116.9,330.7 Z"/><path d="M1115.6,335.9 L1119.5,334.6 L1124.7,352.8 L1118.2,352.8 Z"/><path d="M1217.0,397.0 L1230.0,396.3 L1228.7,400.9 L1218.3,402.2 Z"/><path d="M1209.2,430.7 L1224.8,428.1 L1231.3,430.7 L1214.4,434.6 Z"/><path d="M1245.5,422.9 L1253.3,421.7 L1255.9,429.4 L1246.8,430.7 Z"/><path d="M1270.2,425.5 L1281.9,424.2 L1283.2,430.7 L1271.5,432.0 Z"/><path d="M1213.1,438.5 L1218.3,439.8 L1217.0,444.4 L1213.1,442.4 Z"/><path d="M1049.9,420.3 L1063.1,418.1 L1071.9,426.9 L1054.3,429.1 Z"/><path d="M1094.0,391.6 L1105.0,389.4 L1102.8,404.9 L1094.0,407.1 Z"/><path d="M1734.3,338.8 L1743.1,336.6 L1740.9,352.0 L1734.3,354.2 Z"/><path d="M1747.5,349.8 L1756.3,343.2 L1754.1,356.4 L1747.5,360.8 Z"/><path d="M1729.9,356.4 L1738.7,354.2 L1736.5,365.2 L1729.9,365.2 Z"/><path d="M1778.4,389.4 L1787.2,387.2 L1789.4,393.8 L1780.6,393.8 Z"/></g>
<g fill="#eaeaea"><path d="M1646.0,528.5 L1651.2,526.8 L1652.1,540.7 L1646.9,541.5 L1645.6,535.5 Z"/><path d="M1647.7,517.3 L1650.8,516.4 L1651.2,524.6 L1647.3,525.1 Z"/><path d="M1665.9,547.6 L1680.7,546.7 L1679.8,555.4 L1672.0,551.9 Z"/><path d="M1722.2,563.4 L1737.6,564.1 L1736.5,566.7 L1723.3,566.3 Z"/><path d="M1768.5,564.5 L1778.4,563.4 L1775.1,568.9 L1769.6,568.9 Z"/></g>
<path d="M1973.0,206.7 L1970.8,233.1 L1975.2,244.1 L1973.0,266.1 L1979.6,281.5 L1968.6,299.2 L1951.0,296.9" stroke="#c8c8c8" stroke-width="6" fill="none" stroke-linejoin="round"/>
<path d="M2158.0,415.9 L2149.2,433.5 L2133.8,450.0 L2129.4,450.0" stroke="#c8c8c8" stroke-width="4" fill="none" stroke-linejoin="round" stroke-linecap="round"/>
<path d="M978.3,470.5 L1120.4,470.5 L1129.2,474.2 L1151.2,478.6 L1173.2,489.6 L1179.8,494.0 L1186.5,505.1 L1182.0,520.5 L1199.7,516.1 L1217.3,502.9 L1243.7,498.4 L1252.5,483.0 L1261.3,485.2 L1263.5,507.3 L1271.0,502.9" stroke="#bab6b6" stroke-width="2.2" fill="none" stroke-linejoin="round" stroke-linecap="round"/>
<path d="M1008.1,581.0 L1019.1,579.9 L1038.9,588.7 L1054.3,588.3 L1055.4,585.4 L1063.1,585.4 L1071.9,593.1 L1074.1,599.7 L1080.7,601.9 L1085.2,596.4 L1091.8,599.7 L1100.6,617.4 L1110.5,620.7" stroke="#bab6b6" stroke-width="2.2" fill="none" stroke-linejoin="round" stroke-linecap="round"/>
<path d="M1140.2,663.6 L1138.0,676.8 L1135.8,681.2" stroke="#bab6b6" stroke-width="2.2" fill="none" stroke-linejoin="round" stroke-linecap="round"/>
<path d="M1142.4,663.6 L1151.2,664.7 L1155.6,661.4 L1153.4,676.8" stroke="#bab6b6" stroke-width="2.2" fill="none" stroke-linejoin="round" stroke-linecap="round"/>
<path d="M1149.0,683.4 L1160.0,676.8 L1168.8,679.0 L1182.0,679.0" stroke="#bab6b6" stroke-width="2.2" fill="none" stroke-linejoin="round" stroke-linecap="round"/>
<path d="M1166.6,694.4 L1179.8,701.0" stroke="#bab6b6" stroke-width="2.2" fill="none" stroke-linejoin="round" stroke-linecap="round"/>
<path d="M1182.0,705.5 L1184.2,716.5" stroke="#bab6b6" stroke-width="2.2" fill="none" stroke-linejoin="round" stroke-linecap="round"/>
<path d="M931.0,396.8 L943.3,411.6 L944.5,420.2 L942.1,424.5 L931.0,424.5" stroke="#bab6b6" stroke-width="2.2" fill="none" stroke-linejoin="round" stroke-linecap="round"/>
<path d="M1206.3,716.5 L1210.7,714.3" stroke="#bab6b6" stroke-width="2.2" fill="none" stroke-linejoin="round" stroke-linecap="round"/>
<path d="M1235.9,696.7 L1233.7,705.7 L1235.9,719.1 L1256.1,723.6 L1260.6,745.9 L1249.4,748.2 L1247.1,775.0" stroke="#bab6b6" stroke-width="2.2" fill="none" stroke-linejoin="round" stroke-linecap="round"/>
<path d="M1260.6,745.9 L1274.0,748.2 L1278.5,737.0 L1296.4,730.3" stroke="#bab6b6" stroke-width="2.2" fill="none" stroke-linejoin="round" stroke-linecap="round"/>
<path d="M1296.4,730.3 L1300.8,745.9 L1314.3,741.5 L1307.5,725.8 L1296.4,714.6" stroke="#bab6b6" stroke-width="2.2" fill="none" stroke-linejoin="round" stroke-linecap="round"/>
<path d="M1314.3,741.5 L1318.7,728.0 L1327.7,728.0 L1329.9,743.7 L1341.1,734.8" stroke="#bab6b6" stroke-width="2.2" fill="none" stroke-linejoin="round" stroke-linecap="round"/>
<path d="M1204.6,748.2 L1220.3,754.9 L1224.8,761.6 L1244.9,768.3 L1247.1,775.0" stroke="#bab6b6" stroke-width="2.2" fill="none" stroke-linejoin="round" stroke-linecap="round"/>
<path d="M1220.3,754.9 L1218.0,763.8 L1197.9,779.5" stroke="#bab6b6" stroke-width="2.2" fill="none" stroke-linejoin="round" stroke-linecap="round"/>
<path d="M1247.1,775.0 L1231.5,784.0 L1229.2,797.4 L1244.9,810.8 L1269.5,806.4" stroke="#bab6b6" stroke-width="2.2" fill="none" stroke-linejoin="round" stroke-linecap="round"/>
<path d="M1269.5,806.4 L1274.0,817.5 L1305.3,839.9 L1309.8,851.1 L1307.5,855.6" stroke="#bab6b6" stroke-width="2.2" fill="none" stroke-linejoin="round" stroke-linecap="round"/>
<path d="M1244.9,810.8 L1251.6,813.1 L1251.6,846.6 L1249.4,851.1 L1258.3,875.7" stroke="#bab6b6" stroke-width="2.2" fill="none" stroke-linejoin="round" stroke-linecap="round"/>
<path d="M1258.3,875.7 L1265.0,869.0 L1285.2,871.2 L1289.6,855.6 L1307.5,855.6 L1309.8,869.0 L1323.2,878.0 L1327.7,886.9 L1325.4,898.1 L1305.3,900.3 L1285.2,871.2" stroke="#bab6b6" stroke-width="2.2" fill="none" stroke-linejoin="round" stroke-linecap="round"/>
<path d="M1258.3,875.7 L1251.6,895.9 L1247.1,925.0 L1242.7,958.5 L1238.2,999.9" stroke="#bab6b6" stroke-width="2.2" fill="none" stroke-linejoin="round" stroke-linecap="round"/>
<path d="M1327.7,891.4 L1318.7,904.8 L1309.8,913.8 L1307.5,936.1 L1318.7,942.9" stroke="#bab6b6" stroke-width="2.2" fill="none" stroke-linejoin="round" stroke-linecap="round"/>
<path d="M1312.0,916.0 L1334.4,931.7" stroke="#bab6b6" stroke-width="2.2" fill="none" stroke-linejoin="round" stroke-linecap="round"/>
<path d="M1248.1,1060.0 L1241.5,1041.3 L1243.7,1019.3 L1248.1,997.2" stroke="#bab6b6" stroke-width="2.2" fill="none" stroke-linejoin="round" stroke-linecap="round"/>
<path d="M1558.7,604.1 L1562.3,598.7 L1576.8,596.9 L1585.8,587.9 L1596.6,582.5 L1593.0,566.2" stroke="#bab6b6" stroke-width="2.2" fill="none" stroke-linejoin="round" stroke-linecap="round"/>
<path d="M1517.2,643.8 L1537.1,643.8 L1537.1,634.8 L1542.5,633.0 L1542.5,618.6 L1558.7,618.6 L1558.7,609.6" stroke="#bab6b6" stroke-width="2.2" fill="none" stroke-linejoin="round" stroke-linecap="round"/>
<path d="M1558.7,613.2 L1578.6,625.8 L1618.3,654.7 L1621.9,658.3" stroke="#bab6b6" stroke-width="2.2" fill="none" stroke-linejoin="round" stroke-linecap="round"/>
<path d="M1569.6,625.8 L1573.2,643.8 L1575.0,676.3 L1544.3,676.3 L1542.5,683.5 L1531.7,670.9 L1520.8,670.9" stroke="#bab6b6" stroke-width="2.2" fill="none" stroke-linejoin="round" stroke-linecap="round"/>
<path d="M1647.2,553.6 L1641.7,573.5 L1650.8,587.9 L1652.6,595.1" stroke="#bab6b6" stroke-width="2.2" fill="none" stroke-linejoin="round" stroke-linecap="round"/>
<path d="M1652.6,595.1 L1650.8,618.6 L1654.4,627.6 L1663.4,633.0" stroke="#bab6b6" stroke-width="2.2" fill="none" stroke-linejoin="round" stroke-linecap="round"/>
<path d="M1621.9,658.3 L1636.3,649.3 L1663.4,633.0 L1677.8,636.6" stroke="#bab6b6" stroke-width="2.2" fill="none" stroke-linejoin="round" stroke-linecap="round"/>
<path d="M1677.8,636.6 L1683.3,633.0 L1724.8,654.7" stroke="#bab6b6" stroke-width="2.2" fill="none" stroke-linejoin="round" stroke-linecap="round"/>
<path d="M1730.2,587.9 L1730.2,652.9 L1724.8,654.7" stroke="#bab6b6" stroke-width="2.2" fill="none" stroke-linejoin="round" stroke-linecap="round"/>
<path d="M1730.2,642.0 L1789.7,642.0" stroke="#bab6b6" stroke-width="2.2" fill="none" stroke-linejoin="round" stroke-linecap="round"/>
<path d="M1621.9,658.3 L1623.7,674.5 L1603.8,678.1 L1591.2,681.7 L1578.6,692.6 L1576.8,703.4" stroke="#bab6b6" stroke-width="2.2" fill="none" stroke-linejoin="round" stroke-linecap="round"/>
<path d="M1679.6,636.6 L1683.3,647.5 L1681.4,665.5 L1672.4,683.5" stroke="#bab6b6" stroke-width="2.2" fill="none" stroke-linejoin="round" stroke-linecap="round"/>
<path d="M1623.7,676.3 L1618.3,694.4 L1627.3,687.2 L1647.2,689.0 L1668.8,685.4 L1672.4,683.5" stroke="#bab6b6" stroke-width="2.2" fill="none" stroke-linejoin="round" stroke-linecap="round"/>
<path d="M1724.8,654.7 L1724.8,676.3 L1717.5,679.9 L1715.7,694.4 L1717.5,699.8" stroke="#bab6b6" stroke-width="2.2" fill="none" stroke-linejoin="round" stroke-linecap="round"/>
<path d="M1676.0,708.8 L1683.3,717.8 L1699.5,708.8 L1717.5,699.8" stroke="#bab6b6" stroke-width="2.2" fill="none" stroke-linejoin="round" stroke-linecap="round"/>
<path d="M1717.5,699.8 L1726.6,705.2 L1744.6,703.4 L1753.6,707.0 L1768.1,694.4 L1773.5,703.4 L1777.1,698.0" stroke="#bab6b6" stroke-width="2.2" fill="none" stroke-linejoin="round" stroke-linecap="round"/>
<path d="M1798.8,663.7 L1789.7,676.3 L1786.1,692.6 L1775.3,707.0 L1777.1,732.3" stroke="#bab6b6" stroke-width="2.2" fill="none" stroke-linejoin="round" stroke-linecap="round"/>
<path d="M1697.7,734.1 L1712.1,732.3 L1733.8,730.5 L1748.2,732.3 L1760.9,737.7 L1778.9,732.3" stroke="#bab6b6" stroke-width="2.2" fill="none" stroke-linejoin="round" stroke-linecap="round"/>
<path d="M1672.4,685.4 L1676.0,694.4 L1668.8,708.8 L1659.8,721.4 L1650.8,723.3 L1645.4,734.1" stroke="#bab6b6" stroke-width="2.2" fill="none" stroke-linejoin="round" stroke-linecap="round"/>
<path d="M1676.0,708.8 L1679.6,723.3 L1676.0,732.3 L1683.3,743.1 L1652.6,744.9" stroke="#bab6b6" stroke-width="2.2" fill="none" stroke-linejoin="round" stroke-linecap="round"/>
<path d="M1520.8,692.6 L1542.5,692.6 L1558.7,694.4 L1562.3,705.2 L1564.1,732.3" stroke="#bab6b6" stroke-width="2.2" fill="none" stroke-linejoin="round" stroke-linecap="round"/>
<path d="M1538.9,705.2 L1549.7,708.8 L1556.9,721.4" stroke="#bab6b6" stroke-width="2.2" fill="none" stroke-linejoin="round" stroke-linecap="round"/>
<path d="M1576.8,703.4 L1589.4,699.8 L1609.3,699.8 L1620.1,694.4 L1618.3,723.3" stroke="#bab6b6" stroke-width="2.2" fill="none" stroke-linejoin="round" stroke-linecap="round"/>
<path d="M1587.6,699.8 L1585.8,726.9" stroke="#bab6b6" stroke-width="2.2" fill="none" stroke-linejoin="round" stroke-linecap="round"/>
<path d="M1602.0,699.8 L1605.7,723.3" stroke="#bab6b6" stroke-width="2.2" fill="none" stroke-linejoin="round" stroke-linecap="round"/>
<path d="M1759.1,737.7 L1751.8,766.6 L1755.4,800.0" stroke="#bab6b6" stroke-width="2.2" fill="none" stroke-linejoin="round" stroke-linecap="round"/>
<path d="M1757.2,761.2 L1777.1,761.2 L1798.8,777.4" stroke="#bab6b6" stroke-width="2.2" fill="none" stroke-linejoin="round" stroke-linecap="round"/>
<path d="M1777.1,732.3 L1787.9,734.1 L1813.2,735.9 L1815.0,763.0" stroke="#bab6b6" stroke-width="2.2" fill="none" stroke-linejoin="round" stroke-linecap="round"/>
<path d="M1661.6,744.9 L1665.2,766.6 L1668.8,781.0 L1690.5,784.6 L1701.3,800.0" stroke="#bab6b6" stroke-width="2.2" fill="none" stroke-linejoin="round" stroke-linecap="round"/>
<path d="M1697.7,734.1 L1694.1,763.0 L1683.3,784.6" stroke="#bab6b6" stroke-width="2.2" fill="none" stroke-linejoin="round" stroke-linecap="round"/>
<path d="M1798.8,663.7 L1816.8,698.0 L1830.0,708.8" stroke="#bab6b6" stroke-width="2.2" fill="none" stroke-linejoin="round" stroke-linecap="round"/>
<path d="M1784.3,699.8 L1795.1,679.9 L1816.8,687.2 L1830.0,676.3" stroke="#bab6b6" stroke-width="2.2" fill="none" stroke-linejoin="round" stroke-linecap="round"/>
<path d="M1663.9,783.6 L1688.1,785.8 L1692.5,796.8 L1701.3,796.8 L1703.5,791.3 L1714.5,792.4 L1716.7,812.3 L1725.5,811.2 L1729.9,814.5 L1743.1,816.7 L1751.9,823.3 L1754.1,821.1 L1747.5,805.6 L1747.5,801.2 L1758.5,799.0 L1774.0,805.6 L1776.2,812.3 L1787.2,814.5 L1807.0,810.1" stroke="#bab6b6" stroke-width="2.2" fill="none" stroke-linejoin="round" stroke-linecap="round"/>
<path d="M1662.8,844.2 L1672.7,845.3 L1696.9,845.3 L1707.9,848.6 L1725.5,847.5 L1740.9,847.5" stroke="#bab6b6" stroke-width="2.2" fill="none" stroke-linejoin="round" stroke-linecap="round"/>
<path d="M1716.7,812.3 L1714.5,821.1 L1714.5,838.7 L1725.5,847.5" stroke="#bab6b6" stroke-width="2.2" fill="none" stroke-linejoin="round" stroke-linecap="round"/>
<path d="M1707.9,848.6 L1707.9,869.5 L1703.5,869.5 L1705.7,906.9 L1690.3,909.2" stroke="#bab6b6" stroke-width="2.2" fill="none" stroke-linejoin="round" stroke-linecap="round"/>
<path d="M1705.7,887.1 L1707.9,898.1 L1716.7,895.9 L1721.1,887.1 L1729.9,891.5 L1736.5,882.7 L1747.5,871.7 L1760.7,871.7" stroke="#bab6b6" stroke-width="2.2" fill="none" stroke-linejoin="round" stroke-linecap="round"/>
<path d="M1729.9,847.5 L1743.1,860.7 L1747.5,869.5 L1760.7,871.7" stroke="#bab6b6" stroke-width="2.2" fill="none" stroke-linejoin="round" stroke-linecap="round"/>
<path d="M1740.9,847.5 L1749.7,836.5 L1769.6,838.7 L1769.6,860.7 L1762.9,871.7" stroke="#bab6b6" stroke-width="2.2" fill="none" stroke-linejoin="round" stroke-linecap="round"/>
<path d="M1769.6,838.7 L1771.8,856.3 L1767.4,869.5 L1765.2,882.7 L1765.2,895.9" stroke="#bab6b6" stroke-width="2.2" fill="none" stroke-linejoin="round" stroke-linecap="round"/>
<path d="M1771.8,805.6 L1774.0,827.7 L1785.0,838.7 L1782.8,843.1 L1778.4,838.7 L1780.6,827.7 L1774.0,823.3" stroke="#bab6b6" stroke-width="2.2" fill="none" stroke-linejoin="round" stroke-linecap="round"/>
<path d="M1740.9,911.4 L1749.7,906.9 L1751.9,913.6 L1745.3,920.2 L1740.9,911.4" stroke="#bab6b6" stroke-width="2.2" fill="none" stroke-linejoin="round" stroke-linecap="round"/>
<path d="M1760.7,893.7 L1765.2,900.3 L1762.9,891.5" stroke="#bab6b6" stroke-width="2.2" fill="none" stroke-linejoin="round" stroke-linecap="round"/>
<path d="M1751.9,755.0 L1754.1,768.2 L1749.7,781.4 L1754.1,790.2 L1760.7,799.0" stroke="#bab6b6" stroke-width="2.2" fill="none" stroke-linejoin="round" stroke-linecap="round"/>
<path d="M1774.0,759.4 L1793.8,770.4 L1802.6,779.2" stroke="#bab6b6" stroke-width="2.2" fill="none" stroke-linejoin="round" stroke-linecap="round"/>
<path d="M1593.6,511.4 L1605.1,515.8 L1619.6,518.7" stroke="#bab6b6" stroke-width="2.2" fill="none" stroke-linejoin="round" stroke-linecap="round"/>
<path d="M1558.9,520.1 L1570.4,521.6 L1569.0,531.7 L1566.1,538.9 L1566.1,553.3" stroke="#bab6b6" stroke-width="2.2" fill="none" stroke-linejoin="round" stroke-linecap="round"/>
<path d="M1616.7,453.7 L1622.4,460.9 L1632.6,463.8 L1644.1,471.0 L1642.7,481.1 L1636.9,486.9 L1635.4,492.7 L1639.8,498.4 L1644.1,505.7" stroke="#bab6b6" stroke-width="2.2" fill="none" stroke-linejoin="round" stroke-linecap="round"/>
<path d="M1619.6,452.2 L1632.6,449.3 L1636.9,455.1 L1634.0,462.3" stroke="#bab6b6" stroke-width="2.2" fill="none" stroke-linejoin="round" stroke-linecap="round"/>
<path d="M1636.9,434.9 L1639.8,440.7 L1636.9,447.9" stroke="#bab6b6" stroke-width="2.2" fill="none" stroke-linejoin="round" stroke-linecap="round"/>
<path d="M1645.6,423.3 L1657.1,421.9" stroke="#bab6b6" stroke-width="2.2" fill="none" stroke-linejoin="round" stroke-linecap="round"/>
<path d="M1674.4,426.2 L1675.9,440.7 L1677.3,455.1 L1665.8,460.9" stroke="#bab6b6" stroke-width="2.2" fill="none" stroke-linejoin="round" stroke-linecap="round"/>
<path d="M1665.8,460.9 L1668.7,469.6 L1677.3,471.0 L1691.8,466.7 L1696.1,463.8 L1688.9,458.0 L1677.3,455.1" stroke="#bab6b6" stroke-width="2.2" fill="none" stroke-linejoin="round" stroke-linecap="round"/>
<path d="M1645.6,481.1 L1657.1,481.1 L1668.7,475.3 L1674.4,472.4" stroke="#bab6b6" stroke-width="2.2" fill="none" stroke-linejoin="round" stroke-linecap="round"/>
<path d="M1635.4,486.9 L1645.6,479.7 L1657.1,482.6 L1657.1,489.8 L1649.9,494.1 L1642.7,489.8" stroke="#bab6b6" stroke-width="2.2" fill="none" stroke-linejoin="round" stroke-linecap="round"/>
<path d="M1657.1,489.8 L1671.6,489.8 L1683.1,486.9 L1688.9,481.1" stroke="#bab6b6" stroke-width="2.2" fill="none" stroke-linejoin="round" stroke-linecap="round"/>
<path d="M1677.3,455.1 L1696.1,465.2 L1714.9,468.1 L1719.2,458.0 L1725.0,453.7 L1723.6,440.7 L1723.6,429.1" stroke="#bab6b6" stroke-width="2.2" fill="none" stroke-linejoin="round" stroke-linecap="round"/>
<path d="M1709.1,407.4 L1717.8,410.3 L1735.1,413.2 L1736.6,421.9 L1729.3,426.2 L1722.1,429.1 L1716.3,423.3 L1709.1,421.9" stroke="#bab6b6" stroke-width="2.2" fill="none" stroke-linejoin="round" stroke-linecap="round"/>
<path d="M1712.0,394.4 L1726.4,397.3 L1743.8,395.9" stroke="#bab6b6" stroke-width="2.2" fill="none" stroke-linejoin="round" stroke-linecap="round"/>
<path d="M1725.0,453.7 L1740.9,447.9 L1761.1,443.6 L1768.3,456.6 L1782.8,460.9 L1790.0,460.9" stroke="#bab6b6" stroke-width="2.2" fill="none" stroke-linejoin="round" stroke-linecap="round"/>
<path d="M1743.8,395.9 L1743.8,410.3 L1761.1,423.3 L1766.9,434.9 L1761.1,443.6" stroke="#bab6b6" stroke-width="2.2" fill="none" stroke-linejoin="round" stroke-linecap="round"/>
<path d="M1688.9,481.1 L1714.9,479.7 L1717.8,472.4" stroke="#bab6b6" stroke-width="2.2" fill="none" stroke-linejoin="round" stroke-linecap="round"/>
<path d="M1686.0,491.2 L1701.9,494.1 L1709.1,489.8 L1716.3,478.2" stroke="#bab6b6" stroke-width="2.2" fill="none" stroke-linejoin="round" stroke-linecap="round"/>
<path d="M1716.3,478.2 L1739.4,475.3 L1752.4,484.0 L1749.6,502.8 L1735.1,507.1 L1717.8,505.7 L1710.6,494.1" stroke="#bab6b6" stroke-width="2.2" fill="none" stroke-linejoin="round" stroke-linecap="round"/>
<path d="M1739.4,475.3 L1752.4,484.0 L1755.3,492.7 L1746.7,495.6" stroke="#bab6b6" stroke-width="2.2" fill="none" stroke-linejoin="round" stroke-linecap="round"/>
<path d="M1717.8,507.1 L1746.7,507.1 L1746.7,518.7 L1735.1,525.9 L1717.8,525.9" stroke="#bab6b6" stroke-width="2.2" fill="none" stroke-linejoin="round" stroke-linecap="round"/>
<path d="M1683.1,492.7 L1686.0,498.4 L1700.4,499.9 L1703.3,515.8 L1699.0,518.7 L1706.2,524.4 L1706.2,536.0" stroke="#bab6b6" stroke-width="2.2" fill="none" stroke-linejoin="round" stroke-linecap="round"/>
<path d="M1703.3,515.8 L1714.9,518.7 L1717.8,525.9 L1709.1,527.3" stroke="#bab6b6" stroke-width="2.2" fill="none" stroke-linejoin="round" stroke-linecap="round"/>
<path d="M1706.2,536.0 L1717.8,525.9 L1738.0,524.4" stroke="#bab6b6" stroke-width="2.2" fill="none" stroke-linejoin="round" stroke-linecap="round"/>
<path d="M1709.1,380.0 L1714.9,388.7 L1712.0,394.4" stroke="#bab6b6" stroke-width="2.2" fill="none" stroke-linejoin="round" stroke-linecap="round"/>
<path d="M1663.9,398.2 L1663.9,354.2 L1674.9,327.8 L1677.1,303.6 L1692.5,274.9 L1707.9,263.9 L1716.7,272.7 L1723.3,277.1 L1725.5,308.0" stroke="#bab6b6" stroke-width="2.2" fill="none" stroke-linejoin="round" stroke-linecap="round"/>
<path d="M1725.5,308.0 L1727.7,303.6 L1716.7,272.7 L1732.1,268.3 L1743.1,250.7 L1751.9,255.1 L1747.5,268.3 L1751.9,285.9 L1756.3,312.4 L1756.3,332.2 L1762.9,343.2 L1754.1,358.6 L1743.1,369.6" stroke="#bab6b6" stroke-width="2.2" fill="none" stroke-linejoin="round" stroke-linecap="round"/>
<path d="M1743.1,369.6 L1745.3,387.2 L1743.1,407.1 L1760.7,413.7 L1769.6,431.3 L1765.2,450.0" stroke="#bab6b6" stroke-width="2.2" fill="none" stroke-linejoin="round" stroke-linecap="round"/>
<path d="M1710.1,409.3 L1734.3,409.3 L1743.1,407.1" stroke="#bab6b6" stroke-width="2.2" fill="none" stroke-linejoin="round" stroke-linecap="round"/>
<path d="M1914.9,435.7 L1912.7,450.0" stroke="#bab6b6" stroke-width="2.2" fill="none" stroke-linejoin="round" stroke-linecap="round"/>
<path d="M1914.9,433.5 L1951.0,418.1" stroke="#bab6b6" stroke-width="2.2" fill="none" stroke-linejoin="round" stroke-linecap="round"/>
<path d="M1826.8,538.1 L1833.4,564.5 L1842.2,586.5 L1846.6,595.3" stroke="#bab6b6" stroke-width="2.2" fill="none" stroke-linejoin="round" stroke-linecap="round"/>
<path d="M1822.4,668.0 L1844.4,663.6 L1868.7,654.8 L1884.1,646.0 L1886.3,635.0 L1881.9,630.6" stroke="#bab6b6" stroke-width="2.2" fill="none" stroke-linejoin="round" stroke-linecap="round"/>
<path d="M1864.2,657.0 L1873.1,670.2" stroke="#bab6b6" stroke-width="2.2" fill="none" stroke-linejoin="round" stroke-linecap="round"/>
<path d="M1804.8,467.6 L1800.4,487.4 L1787.2,494.0 L1778.4,494.0" stroke="#bab6b6" stroke-width="2.2" fill="none" stroke-linejoin="round" stroke-linecap="round"/>
<path d="M1914.9,586.5 L1914.9,586.5" stroke="#bab6b6" stroke-width="2.2" fill="none" stroke-linejoin="round" stroke-linecap="round"/>
<path d="M1951.0,422.5 L1934.7,431.3 L1919.3,435.7" stroke="#bab6b6" stroke-width="2.2" fill="none" stroke-linejoin="round" stroke-linecap="round"/>
<path d="M1951.0,415.9 L1964.2,422.5 L1973.0,431.3 L1988.4,429.1 L2001.6,450.0" stroke="#bab6b6" stroke-width="2.2" fill="none" stroke-linejoin="round" stroke-linecap="round"/>
<path d="M2100.7,450.0 L2127.2,444.5" stroke="#bab6b6" stroke-width="2.2" fill="none" stroke-linejoin="round" stroke-linecap="round"/>
<path d="M2210.9,440.1 L2226.3,433.5 L2241.7,437.9 L2248.3,450.0" stroke="#bab6b6" stroke-width="2.2" fill="none" stroke-linejoin="round" stroke-linecap="round"/>
<path d="M2045.7,469.8 L2061.1,478.6 L2063.3,496.2 L2087.5,505.1 L2091.9,516.1 L2118.4,518.3 L2133.8,524.9 L2162.4,516.1 L2171.2,507.3 L2169.0,500.6 L2193.2,489.6 L2210.9,487.4 L2204.2,478.6 L2191.0,476.4 L2193.2,463.2 L2199.8,458.8 L2210.9,450.0" stroke="#bab6b6" stroke-width="2.2" fill="none" stroke-linejoin="round" stroke-linecap="round"/>
<path d="M2006.1,450.0 L2025.9,454.4 L2043.5,465.4 L2069.9,456.6 L2083.1,461.0 L2100.7,458.8 L2102.9,450.0" stroke="#bab6b6" stroke-width="2.2" fill="none" stroke-linejoin="round" stroke-linecap="round"/>
<path d="M2118.4,450.0 L2122.8,458.8 L2149.2,463.2 L2160.2,467.6 L2182.2,461.0 L2193.2,463.2" stroke="#bab6b6" stroke-width="2.2" fill="none" stroke-linejoin="round" stroke-linecap="round"/>
<path d="M2246.1,450.0 L2250.5,463.2 L2265.9,476.4 L2273.0,480.8" stroke="#bab6b6" stroke-width="2.2" fill="none" stroke-linejoin="round" stroke-linecap="round"/>
<path d="M2273.0,496.2 L2268.1,513.9 L2243.9,522.7 L2232.9,535.9" stroke="#bab6b6" stroke-width="2.2" fill="none" stroke-linejoin="round" stroke-linecap="round"/>
<path d="M2001.6,586.5 L2008.3,599.7 L2017.1,604.2 L2034.7,608.6 L2050.1,613.0 L2056.7,606.4 L2069.9,610.8 L2078.7,604.2 L2094.1,604.2 L2102.9,608.6 L2100.7,626.2 L2111.8,643.8 L2122.8,637.2 L2138.2,635.0 L2144.8,641.6 L2149.2,643.8" stroke="#bab6b6" stroke-width="2.2" fill="none" stroke-linejoin="round" stroke-linecap="round"/>
<path d="M2008.3,599.7 L2017.1,608.6 L2050.1,617.4 L2052.3,608.6" stroke="#bab6b6" stroke-width="2.2" fill="none" stroke-linejoin="round" stroke-linecap="round"/>
<path d="M2056.7,619.6 L2065.5,628.4 L2069.9,641.6" stroke="#bab6b6" stroke-width="2.2" fill="none" stroke-linejoin="round" stroke-linecap="round"/>
<path d="M2074.3,643.8 L2083.1,617.4 L2094.1,608.6" stroke="#bab6b6" stroke-width="2.2" fill="none" stroke-linejoin="round" stroke-linecap="round"/>
<path d="M2100.7,626.2 L2109.6,643.8 L2100.7,652.6 L2098.5,665.8 L2105.2,681.2 L2105.2,696.6" stroke="#bab6b6" stroke-width="2.2" fill="none" stroke-linejoin="round" stroke-linecap="round"/>
<path d="M2118.4,641.6 L2114.0,661.4 L2127.2,663.6 L2136.0,681.2 L2125.0,681.2 L2127.2,696.6 L2140.4,701.0" stroke="#bab6b6" stroke-width="2.2" fill="none" stroke-linejoin="round" stroke-linecap="round"/>
<path d="M2118.4,641.6 L2138.2,648.2 L2131.6,657.0 L2142.6,674.6 L2149.2,694.4 L2144.8,701.0" stroke="#bab6b6" stroke-width="2.2" fill="none" stroke-linejoin="round" stroke-linecap="round"/>
<path d="M2235.1,546.9 L2243.9,551.3" stroke="#bab6b6" stroke-width="2.2" fill="none" stroke-linejoin="round" stroke-linecap="round"/>
<path d="M1838.8,474.9 L1843.5,459.1 L1859.4,447.9 L1878.5,457.5 L1903.9,452.7 L1915.0,455.9 L1911.8,440.0" stroke="#bab6b6" stroke-width="2.2" fill="none" stroke-linejoin="round" stroke-linecap="round"/>
<path d="M1840.4,474.9 L1853.1,490.8" stroke="#bab6b6" stroke-width="2.2" fill="none" stroke-linejoin="round" stroke-linecap="round"/>
<path d="M1868.9,521.0 L1876.9,517.8 L1886.4,525.8 L1886.4,498.8 L1902.3,495.6 L1918.2,509.9 L1932.5,508.3 L1940.4,525.8 L1949.9,528.9 L1970.6,516.2 L1977.0,514.7 L2008.7,514.7 L2010.3,495.6 L2023.0,495.6 L2034.1,471.8 L2040.0,467.0" stroke="#bab6b6" stroke-width="2.2" fill="none" stroke-linejoin="round" stroke-linecap="round"/>
<path d="M1892.8,522.6 L1900.7,516.2 L1919.8,528.9 L1932.5,543.2 L1943.6,549.6" stroke="#bab6b6" stroke-width="2.2" fill="none" stroke-linejoin="round" stroke-linecap="round"/>
<path d="M1876.9,551.2 L1891.2,546.4 L1911.8,557.5 L1915.0,563.9 L1930.9,552.8 L1943.6,551.2 L1948.4,554.4 L1964.2,544.8 L1965.8,551.2" stroke="#bab6b6" stroke-width="2.2" fill="none" stroke-linejoin="round" stroke-linecap="round"/>
<path d="M1913.4,560.7 L1910.2,575.0 L1916.6,590.9 L1911.8,597.2 L1921.4,609.9 L1916.6,624.2" stroke="#bab6b6" stroke-width="2.2" fill="none" stroke-linejoin="round" stroke-linecap="round"/>
<path d="M1916.6,598.8 L1938.8,597.2 L1940.4,589.3 L1954.7,582.9 L1964.2,560.7 L1965.8,548.0 L1983.3,551.2 L1986.5,560.7" stroke="#bab6b6" stroke-width="2.2" fill="none" stroke-linejoin="round" stroke-linecap="round"/>
<path d="M1983.3,579.8 L1970.6,606.8 L1957.9,609.9 L1956.3,616.3 L1964.2,629.0 L1951.5,630.6" stroke="#bab6b6" stroke-width="2.2" fill="none" stroke-linejoin="round" stroke-linecap="round"/>
<path d="M1943.6,538.5 L1951.5,525.8 L1970.6,528.9 L1973.8,535.3 L1981.7,532.1 L2010.3,519.4 L2010.3,503.5 L2023.0,497.2 L2021.4,482.9" stroke="#bab6b6" stroke-width="2.2" fill="none" stroke-linejoin="round" stroke-linecap="round"/>
<path d="M1965.8,551.2 L1977.0,541.7 L1986.5,551.2 L1999.2,557.5 L2002.4,582.9 L2010.3,592.5" stroke="#bab6b6" stroke-width="2.2" fill="none" stroke-linejoin="round" stroke-linecap="round"/>
<path d="M1826.1,538.5 L1832.4,562.3 L1834.0,571.8 L1845.1,586.1 L1846.7,595.7" stroke="#bab6b6" stroke-width="2.2" fill="none" stroke-linejoin="round" stroke-linecap="round"/>
<path d="M1780.0,598.8 L1792.7,594.1 L1811.8,586.1 L1830.8,600.4 L1846.7,598.8" stroke="#bab6b6" stroke-width="2.2" fill="none" stroke-linejoin="round" stroke-linecap="round"/>
<path d="M1800.6,578.2 L1813.4,554.4 L1827.6,551.2" stroke="#bab6b6" stroke-width="2.2" fill="none" stroke-linejoin="round" stroke-linecap="round"/>
<path d="M1780.0,560.7 L1789.5,555.9 L1813.4,552.8" stroke="#bab6b6" stroke-width="2.2" fill="none" stroke-linejoin="round" stroke-linecap="round"/>
<path d="M1805.4,509.9 L1826.1,514.7 L1838.8,521.0 L1848.3,522.6" stroke="#bab6b6" stroke-width="2.2" fill="none" stroke-linejoin="round" stroke-linecap="round"/>
<path d="M1824.5,525.8 L1826.1,535.3 L1837.2,540.1 L1851.5,543.2" stroke="#bab6b6" stroke-width="2.2" fill="none" stroke-linejoin="round" stroke-linecap="round"/>
<text x="1025.7" y="433.5" font-family="Liberation Sans, sans-serif" font-size="19" fill="#4a4a58"  textLength="142" lengthAdjust="spacingAndGlyphs" stroke="#ffffff" stroke-width="3" paint-order="stroke" stroke-linejoin="round" >NORTH AMERICA</text>
<text x="1694" y="452.9" font-family="Liberation Sans, sans-serif" font-size="19" fill="#4a4a58"  textLength="67" lengthAdjust="spacingAndGlyphs" stroke="#ffffff" stroke-width="3" paint-order="stroke" stroke-linejoin="round" >EUROPE</text>
<text x="2114" y="419.2" font-family="Liberation Sans, sans-serif" font-size="19" fill="#4a4a58"  textLength="39.6" lengthAdjust="spacingAndGlyphs" stroke="#ffffff" stroke-width="3" paint-order="stroke" stroke-linejoin="round" >ASIA</text>
<text x="1702.4" y="725.3" font-family="Liberation Sans, sans-serif" font-size="19" fill="#4a4a58"  textLength="60.6" lengthAdjust="spacingAndGlyphs" stroke="#ffffff" stroke-width="3" paint-order="stroke" stroke-linejoin="round" >AFRICA</text>
<text x="1276.5" y="838.2" font-family="Liberation Sans, sans-serif" font-size="19" fill="#4a4a58"  textLength="142" lengthAdjust="spacingAndGlyphs" stroke="#ffffff" stroke-width="3" paint-order="stroke" stroke-linejoin="round" >SOUTH AMERICA</text>
<text x="1845.3" y="1326.3" font-family="Liberation Sans, sans-serif" font-size="19" fill="#4a4a58"  textLength="109.7" lengthAdjust="spacingAndGlyphs" stroke="#ffffff" stroke-width="3" paint-order="stroke" stroke-linejoin="round" >ANTARCTICA</text>
<text x="1329.4" y="595.8" font-family="Liberation Sans, sans-serif" font-size="20.5" font-style="italic" fill="#777777" textLength="139.8" lengthAdjust="spacing">Atlantic Ocean</text>
<text x="1945" y="870" font-family="Liberation Sans, sans-serif" font-size="20.5" font-style="italic" fill="#777777" textLength="125.3" lengthAdjust="spacing">Indian Ocean</text>
<rect x="949.4" y="1332.8" width="12.2" height="12.2" fill="#f25022"/><rect x="963.3" y="1332.8" width="12.2" height="12.2" fill="#7fba00"/><rect x="949.4" y="1345.2" width="12.2" height="12.2" fill="#00a4ef"/><rect x="963.3" y="1345.2" width="12.2" height="12.2" fill="#ffb900"/>
<text x="982" y="1353" font-family="Liberation Sans, sans-serif" font-size="20.5" fill="#6f6f6f" stroke="#6f6f6f" stroke-width="0.5" textLength="147" lengthAdjust="spacingAndGlyphs">Microsoft Azure</text>
<text x="1974.3" y="1351.5" font-family="Liberation Sans, sans-serif" font-size="16" fill="#222222"  textLength="86" lengthAdjust="spacingAndGlyphs" stroke="#ffffff" stroke-width="2.5" paint-order="stroke" stroke-linejoin="round" >©2025 OSM</text>
<text x="2069.2" y="1351.5" font-family="Liberation Sans, sans-serif" font-size="16" fill="#222222"  textLength="111.2" lengthAdjust="spacingAndGlyphs" stroke="#ffffff" stroke-width="2.5" paint-order="stroke" stroke-linejoin="round" >©2025 TomTom</text>
<text x="2189.3" y="1351.5" font-family="Liberation Sans, sans-serif" font-size="16" fill="#222222"  textLength="66.7" lengthAdjust="spacingAndGlyphs" stroke="#ffffff" stroke-width="2.5" paint-order="stroke" stroke-linejoin="round" >Feedback</text>
<rect x="2189" y="1353.8" width="67" height="1.4" fill="#222"/>
<path d="M2270,870 l2.5,-12 h2 v12 z" fill="#222"/>
</svg><div style="position:absolute;left:0;top:0;right:0;bottom:0;border-radius:0 12px 12px 0;box-shadow:inset -1px 0 0 rgba(255,255,255,0.9)"></div></div>
<div style="position:absolute;left:846px;top:867px;width:321px;height:273px;background:#fff;border-radius:8px;box-shadow:0 12px 24px rgba(0,0,0,0.17),0 0 3px rgba(0,0,0,0.13)"></div>
<div style="position:absolute;left:849px;top:868px;width:312px;height:71px;border:4px solid #ff0000;border-radius:3px;box-sizing:border-box"></div>
<div style="position:absolute;left:852.5px;top:872px;width:305.0px;height:63px;border:2.5px solid #000;border-radius:5px;box-sizing:border-box"></div>
<div class="t" style="left:867.8px;top:893.6px;font-size:24.55px;font-weight:normal;color:#3d3d3d;">Show on map</div>
<div class="t" style="left:867.8px;top:954.1px;font-size:24.24px;font-weight:normal;color:#3d3d3d;">Create tileset</div>
<div style="position:absolute;left:846px;top:1003px;width:321px;height:1px;background:#e0e0e0"></div>
<div class="t" style="left:911.1px;top:1034.4px;font-size:23.12px;font-weight:normal;color:#3d3d3d;">Rename</div>
<div class="t" style="left:911.0px;top:1094.9px;font-size:24.15px;font-weight:normal;color:#3d3d3d;">Delete</div>
<div style="position:absolute;left:466px;top:1107px;width:355px;height:69px;border:4px solid #ff0000;border-radius:3px;box-sizing:border-box"></div>
<div style="position:absolute;left:530px;top:1164px;width:222px;height:57px;background:#fff;border-radius:8px;box-shadow:0 4px 8px rgba(0,0,0,0.14),0 0 2px rgba(0,0,0,0.12)"></div>
<div class="t" style="left:544.0px;top:1183.5px;font-size:20.34px;font-weight:normal;color:#242424;">Power_Plant.geojson</div>
<svg width="2293" height="1385" viewBox="0 0 2293 1385" style="position:absolute;left:0;top:0" fill="none" stroke-linecap="round" stroke-linejoin="round">
<path d="M46.6,84.5 a2.8,2.8 0 0 1 2.8,-2.8 h15.3 l5.1,5.1 v15.8 a2.8,2.8 0 0 1 -2.8,2.8 h-17.6 a2.8,2.8 0 0 1 -2.8,-2.8 z" stroke="#881798" stroke-width="1.7" />
<path d="M51.6,82 v5 a2.2,2.2 0 0 0 2.2,2.2 h6.2 a2.2,2.2 0 0 0 2.2,-2.2 v-5" stroke="#881798" stroke-width="1.7" />
<path d="M50,105 v-8 a2.2,2.2 0 0 1 2.2,-2.2 h11.6 a2.2,2.2 0 0 1 2.2,2.2 v8" stroke="#881798" stroke-width="1.7" />
<path d="M125.86,94.58 A11.3,11.3 0 1 1 120.25,83.81" stroke="#107c10" stroke-width="1.7" />
<path d="M125,81.8 v5.6 h-5.8" stroke="#107c10" stroke-width="1.7" />
<path d="M174.76,84.50 L174.16,79.92 L169.24,79.92 L168.64,84.50 L165.35,86.40 L161.08,84.63 L158.62,88.89 L162.29,91.70 L162.29,95.50 L158.62,98.31 L161.08,102.57 L165.35,100.80 L168.64,102.70 L169.24,107.28 L174.16,107.28 L174.76,102.70 L178.05,100.80 L182.32,102.57 L184.78,98.31 L181.11,95.50 L181.11,91.70 L184.78,88.89 L182.32,84.63 L178.05,86.40 Z" stroke="#0f548c" stroke-width="1.7" />
<circle cx="171.7" cy="93.6" r="3.6" stroke="#0f548c" stroke-width="1.7"/>
<path d="M243.8,81 v25.4 M231,93.7 h25.5" stroke="#107c10" stroke-width="1.8" />
<path d="M428.5,104.9 h-6.5 a5,5 0 0 1 -5,-5 v-13 a5,5 0 0 1 5,-5 h13.5 a5,5 0 0 1 5,5 v7.5" stroke="#424242" stroke-width="1.7" />
<circle cx="422.9" cy="89" r="1.2" fill="#424242"/>
<circle cx="422.9" cy="94.2" r="1.2" fill="#424242"/>
<circle cx="422.9" cy="99.5" r="1.2" fill="#424242"/>
<path d="M428,89.3 h7.4" stroke="#424242" stroke-width="1.7" />
<path d="M428,94.6 q2,0 3.8,-0.8" stroke="#424242" stroke-width="1.5" />
<circle cx="436.9" cy="101.8" r="8" fill="#424242"/>
<path d="M436.2,97.5 v4.8 h3.6" stroke="#ffffff" stroke-width="1.7" stroke-linecap="square"/>
<path d="M637.5,108 a2,2 0 0 0 0,0 M631.8,103.4 q-1,2.4 -4,3 l-4.6,1 l1.2,-6 q0.5,-1.8 1.7,-3.2 l14.4,-14.4 q3,-3 6,0 q3,3 0,6 l-4.6,4.6 M639.6,83.2 l5.3,5.3" stroke="#881798" stroke-width="1.7" />
<path d="M643.86,96.77 L643.65,93.63 L640.75,93.63 L640.54,96.77 L638.76,97.80 L635.94,96.41 L634.48,98.92 L637.10,100.67 L637.10,102.73 L634.48,104.48 L635.94,106.99 L638.76,105.60 L640.54,106.63 L640.75,109.77 L643.65,109.77 L643.86,106.63 L645.64,105.60 L648.46,106.99 L649.92,104.48 L647.30,102.73 L647.30,100.67 L649.92,98.92 L648.46,96.41 L645.64,97.80 Z" fill="#881798"/>
<circle cx="642.2" cy="101.7" r="2" fill="#fff"/>
<path d="M1993,40 l1.4,-7.2 q0.4,-1.6 1.6,-2.8 l17.2,-17.2 q3,-3 6,0 q3,3 0,6 l-17.2,17.2 q-1.2,1.2 -2.8,1.6 z M2010,15.5 l6,6" stroke="#242424" stroke-width="1.6" />
<path d="M2108.4,26.7 l6.3,6.3 l6.3,-6.3" stroke="#424242" stroke-width="1.3" />
<path d="M2185,16.5 h-4 a5,5 0 0 0 -5,5 v12 a5,5 0 0 0 5,5 h13 a5,5 0 0 0 5,-5 v-3" stroke="#ffffff" stroke-width="1.7" />
<path d="M2193.5,13.5 l9,8 l-9,8 v-4.5 q-8,-0.5 -12.5,6.5 q0.5,-11 12.5,-13 z" stroke="#ffffff" stroke-width="1.7" />
<path d="M437.7,168.8 l-10.2,10 l10.2,10.2 M444.9,168.8 l-10.2,10 l10.2,10.2" stroke="#333333" stroke-width="1.7" />
<path d="M895.5,168.8 l-10.2,10 l10.2,10.2 M902.6999999999999,168.8 l-10.2,10 l10.2,10.2" stroke="#333333" stroke-width="1.7" />
<path d="M69.8,312 v25.6 M57,324.8 h25.6" stroke="#242424" stroke-width="1.6" />
<circle cx="419" cy="322" r="10.4" stroke="#333" stroke-width="1.8"/>
<path d="M426.6,329.6 l6.8,6.8" stroke="#333" stroke-width="1.8" />
<circle cx="506.9" cy="308.2" r="10.5" stroke="#616161" stroke-width="1.7"/>
<path d="M514.5,315.8 l7,6.8" stroke="#616161" stroke-width="1.7" />
<path d="M869.8,302.8 h23.8 M873.6,309.8 h16.4 M877.2,316.9 h9.4" stroke="#333" stroke-width="1.7" />
<path d="M555.2,224.4 l8.3,8.1 l-8.3,8.1" stroke="#242424" stroke-width="1.5" />
<path d="M38.5,389.5 l7,7 l7,-7" stroke="#424242" stroke-width="1.6" />
<path d="M82,446.5 l7,7 l7,-7" stroke="#424242" stroke-width="1.6" />
<path d="M124.5,503.5 l7,7 l7,-7" stroke="#424242" stroke-width="1.6" />
<path d="M171.5,557 l7,7 l-7,7" stroke="#424242" stroke-width="1.6" />
<path d="M171.5,614 l7,7 l-7,7" stroke="#424242" stroke-width="1.6" />
<path d="M171.5,671 l7,7 l-7,7" stroke="#424242" stroke-width="1.6" />
<path d="M171.5,728 l7,7 l-7,7" stroke="#424242" stroke-width="1.6" />
<path d="M171.5,785 l7,7 l-7,7" stroke="#424242" stroke-width="1.6" />
<path d="M171.5,842 l7,7 l-7,7" stroke="#424242" stroke-width="1.6" />
<path d="M164.3,497.6 a3.2,3.2 0 0 1 3.2,-3.2 h6 q1,0 1.8,0.8 l2.6,2.6 h10.6 a3.2,3.2 0 0 1 3.2,3.2 v14.2 a3.2,3.2 0 0 1 -3.2,3.2 h-21 a3.2,3.2 0 0 1 -3.2,-3.2 z" stroke="#424242" stroke-width="1.7" />
<path d="M164.3,501.6 h9.5 l3.6,-3.6" stroke="#424242" stroke-width="1.7" />
<path d="M206.5,555.4 a3.2,3.2 0 0 1 3.2,-3.2 h6 q1,0 1.8,0.8 l2.6,2.6 h10.6 a3.2,3.2 0 0 1 3.2,3.2 v14.2 a3.2,3.2 0 0 1 -3.2,3.2 h-21 a3.2,3.2 0 0 1 -3.2,-3.2 z" fill="#117865" stroke="none" />
<path d="M206.0,559.8 h9.5 l3.6,-3.6" stroke="#ebebeb" stroke-width="1.6" />
<path d="M206.5,612.4 a3.2,3.2 0 0 1 3.2,-3.2 h6 q1,0 1.8,0.8 l2.6,2.6 h10.6 a3.2,3.2 0 0 1 3.2,3.2 v14.2 a3.2,3.2 0 0 1 -3.2,3.2 h-21 a3.2,3.2 0 0 1 -3.2,-3.2 z" stroke="#424242" stroke-width="1.7" />
<path d="M206.5,616.4 h9.5 l3.6,-3.6" stroke="#424242" stroke-width="1.7" />
<path d="M206.5,669.4 a3.2,3.2 0 0 1 3.2,-3.2 h6 q1,0 1.8,0.8 l2.6,2.6 h10.6 a3.2,3.2 0 0 1 3.2,3.2 v14.2 a3.2,3.2 0 0 1 -3.2,3.2 h-21 a3.2,3.2 0 0 1 -3.2,-3.2 z" stroke="#424242" stroke-width="1.7" />
<path d="M206.5,673.4 h9.5 l3.6,-3.6" stroke="#424242" stroke-width="1.7" />
<path d="M206.5,726.4 a3.2,3.2 0 0 1 3.2,-3.2 h6 q1,0 1.8,0.8 l2.6,2.6 h10.6 a3.2,3.2 0 0 1 3.2,3.2 v14.2 a3.2,3.2 0 0 1 -3.2,3.2 h-21 a3.2,3.2 0 0 1 -3.2,-3.2 z" stroke="#424242" stroke-width="1.7" />
<path d="M206.5,730.4 h9.5 l3.6,-3.6" stroke="#424242" stroke-width="1.7" />
<path d="M206.5,783.4 a3.2,3.2 0 0 1 3.2,-3.2 h6 q1,0 1.8,0.8 l2.6,2.6 h10.6 a3.2,3.2 0 0 1 3.2,3.2 v14.2 a3.2,3.2 0 0 1 -3.2,3.2 h-21 a3.2,3.2 0 0 1 -3.2,-3.2 z" stroke="#424242" stroke-width="1.7" />
<path d="M206.5,787.4 h9.5 l3.6,-3.6" stroke="#424242" stroke-width="1.7" />
<path d="M206.5,840.4 a3.2,3.2 0 0 1 3.2,-3.2 h6 q1,0 1.8,0.8 l2.6,2.6 h10.6 a3.2,3.2 0 0 1 3.2,3.2 v14.2 a3.2,3.2 0 0 1 -3.2,3.2 h-21 a3.2,3.2 0 0 1 -3.2,-3.2 z" stroke="#424242" stroke-width="1.7" />
<path d="M206.5,844.4 h9.5 l3.6,-3.6" stroke="#424242" stroke-width="1.7" />
<defs><linearGradient id="lhg" x1="0" y1="0" x2="0" y2="1"><stop offset="0" stop-color="#ffffff"/><stop offset="1" stop-color="#ececec"/></linearGradient><linearGradient id="lhb" x1="0" y1="0" x2="1" y2="1"><stop offset="0" stop-color="#3b7de8"/><stop offset="1" stop-color="#1a4fc4"/></linearGradient></defs>
<rect x="121.3" y="434.5" width="27.2" height="30.5" rx="3.5" fill="url(#lhg)" stroke="#8f8f8f" stroke-width="1.5"/>
<path d="M126.2,448.2 l8.7,-7.8 l8.7,7.8 v2.5 h-2 q-6,0 -8.5,4 v4 h-5.9 q-1,0 -1,-1 z" fill="url(#lhb)" stroke="none" />
<path d="M134.6,454.2 q1.3,-1.6 2.6,0 t2.6,0 t2.6,0 t2.6,0 M134.6,459 q1.3,-1.6 2.6,0 t2.6,0 t2.6,0 t2.6,0" stroke="#1f5fd6" stroke-width="1.4" />
<path d="M902.5,402.5 l7.5,-12 l7.5,12 z" fill="#8a8a8a" stroke="none" stroke="#8a8a8a" stroke-width="1" stroke-linejoin="round"/>
<circle cx="829.5" cy="1149" r="2" fill="#242424"/>
<circle cx="837.5" cy="1149" r="2" fill="#242424"/>
<circle cx="845.5" cy="1149" r="2" fill="#242424"/>
<path d="M876,1031 h2 M878,1031 v26 M876,1057 h4 M874,1034 h-2.5 a2.5,2.5 0 0 0 -2.5,2.5 v13 a2.5,2.5 0 0 0 2.5,2.5 h2.5 M882,1034 h10 a2.5,2.5 0 0 1 2.5,2.5 v13 a2.5,2.5 0 0 1 -2.5,2.5 h-10" stroke="#424242" stroke-width="1.7" />
<path d="M869.5,1095 h26 M876,1095 v-1.5 a3.5,3.5 0 0 1 3.5,-3.5 h5 a3.5,3.5 0 0 1 3.5,3.5 v1.5 M872,1095 l1.8,18.5 a4,4 0 0 0 4,3.6 h8.6 a4,4 0 0 0 4,-3.6 l1.8,-18.5 M879.5,1101 v10 M885,1101 v10" stroke="#424242" stroke-width="1.7" />
</svg>
</body></html>
